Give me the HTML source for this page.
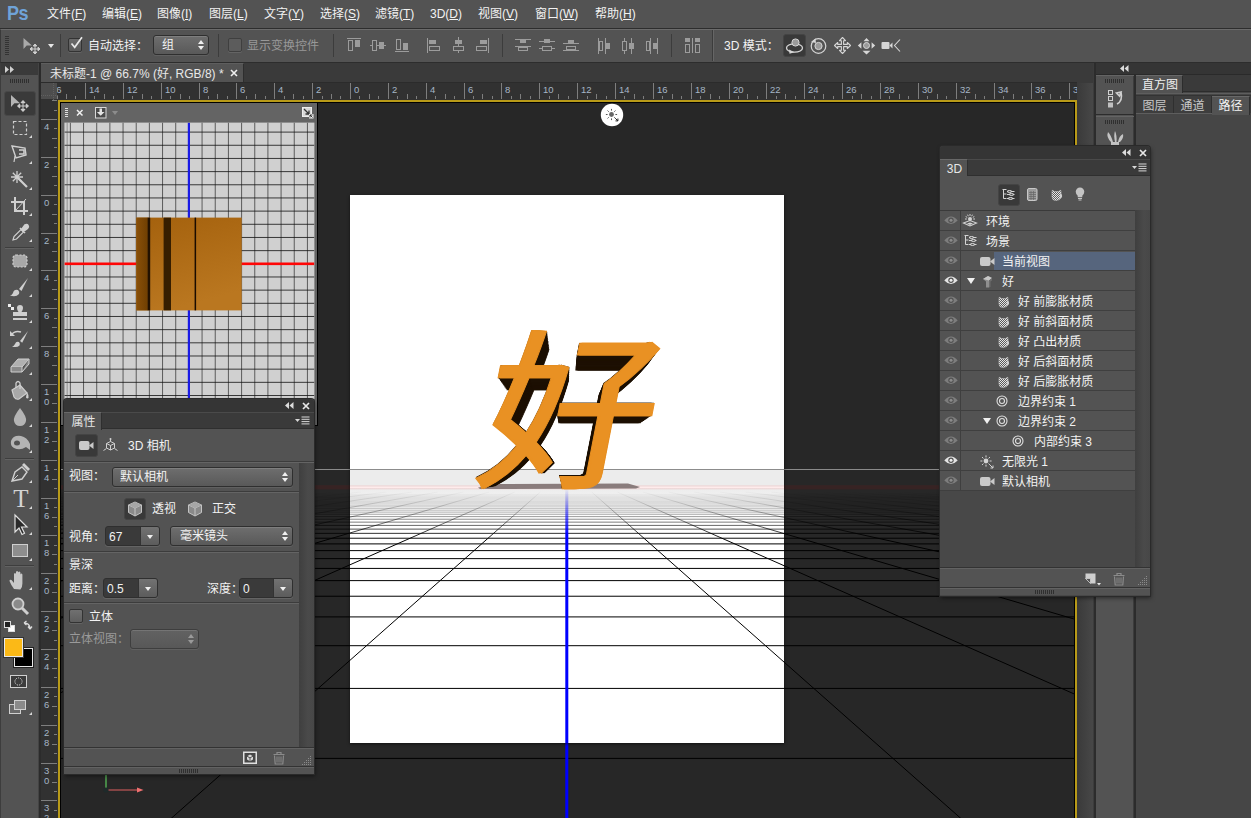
<!DOCTYPE html>
<html lang="zh-CN">
<head>
<meta charset="utf-8">
<title>未标题-1 @ 66.7% (好, RGB/8) *</title>
<style>
*{box-sizing:border-box;margin:0;padding:0}
html,body{width:1251px;height:818px;overflow:hidden;background:#535353}
body{font-family:"Liberation Sans","Noto Sans CJK SC",sans-serif;font-size:12px;color:#f0f0f0;line-height:1;position:relative}
#app{position:absolute;left:0;top:0;width:1251px;height:818px;overflow:hidden;background:#535353}
.abs{position:absolute}
svg{display:block;position:absolute;overflow:visible}

#menubar{position:absolute;left:0;top:0;width:1251px;height:29px;background:#535353;border-bottom:1px solid #2d2d2d}
#menubar .mi{position:absolute;top:7px;height:14px;line-height:14px;font-size:12px;color:#f2f2f2;white-space:nowrap;letter-spacing:0}
#menubar .mi u{text-decoration:underline;text-underline-offset:1px}
#pslogo{position:absolute;left:7px;top:1px;font-family:"Liberation Sans",sans-serif;font-weight:bold;font-size:21px;line-height:24px;color:#6fa3d8;letter-spacing:-0.5px;transform:scaleX(.86);transform-origin:0 0}
#optbar{position:absolute;left:0;top:29px;width:1251px;height:34px;background:#535353;border-top:1px solid #6b6b6b;border-bottom:1px solid #2d2d2d;border-left:1px solid #3a3a3a}
#optbar .t{position:absolute;top:9px;height:14px;line-height:14px;font-size:12px;color:#f2f2f2;white-space:nowrap}
#optbar .dis{color:#989898}
.vsep{position:absolute;width:1px;background:#3c3c3c}
.sel{position:absolute;border:1px solid #2f2f2f;border-radius:3px;background:linear-gradient(#6e6e6e,#595959);box-shadow:inset 0 1px 0 rgba(255,255,255,.12),0 1px 0 rgba(255,255,255,.08)}
.sel .lab{position:absolute;left:7px;top:0;bottom:0;display:flex;align-items:center;font-size:12px;color:#f2f2f2;white-space:nowrap}
.sel .ud{position:absolute;right:3px;top:50%;margin-top:-5px;width:7px;height:10px}
.sel .ud:before{content:"";position:absolute;left:0;top:0;border:3.5px solid transparent;border-top:none;border-bottom:4px solid #f0f0f0}
.sel .ud:after{content:"";position:absolute;left:0;bottom:0;border:3.5px solid transparent;border-bottom:none;border-top:4px solid #f0f0f0}
.sel.disabled .ud:before{border-bottom-color:#9a9a9a}
.sel.disabled .ud:after{border-top-color:#9a9a9a}
.chk{position:absolute;width:14px;height:14px;border:1px solid #333;border-radius:2px;background:linear-gradient(#6a6a6a,#5a5a5a);box-shadow:0 1px 0 rgba(255,255,255,.1)}
#tabstrip{position:absolute;left:41px;top:63px;width:1053px;height:20px;background:#3a3a3a;border-bottom:1px solid #2b2b2b}
#doctab{position:absolute;left:0;top:0;width:203px;height:19px;background:#535353;border-right:1px solid #2e2e2e;border-top:1px solid #5e5e5e}
#doctab .tt{position:absolute;left:9px;top:3px;line-height:14px;font-size:12px;color:#e8e8e8;white-space:nowrap}
#doctab .x{position:absolute;left:188px;top:1px;font-size:12px;line-height:16px;color:#eee;font-weight:bold}
#hruler{position:absolute;left:41px;top:83px;width:1036px;height:17px;background:#313131;overflow:hidden}
#vruler{position:absolute;left:41px;top:100px;width:17px;height:718px;background:#313131;overflow:hidden}
#rcorner{position:absolute;left:41px;top:83px;width:16px;height:16px;background:#4d4d4d}
.rl{position:absolute;font-size:9.5px;line-height:10px;color:#a6b6c6;font-family:"Liberation Sans",sans-serif}
#toolbar{position:absolute;left:0;top:63px;width:39px;height:755px;background:#535353;border-left:1px solid #3d3d3d;border-right:1px solid #444}
#toolbar .hd{position:absolute;left:0;top:0;width:37px;height:12px;background:#3a3a3a}
#tgap{position:absolute;left:39px;top:63px;width:2px;height:755px;background:#2b2b2b}
.grip{position:absolute;height:4px;background:repeating-linear-gradient(90deg,#2f2f2f 0 1px,transparent 1px 2px)}
.tsep{position:absolute;left:4px;width:29px;height:1px;background:#3e3e3e;box-shadow:0 1px 0 #626262}
.corner{position:absolute;width:0;height:0;border-left:3px solid transparent;border-bottom:3px solid #d8d8d8}


#canvas{position:absolute;left:58px;top:100px;width:1019px;height:718px;background:#272727;overflow:hidden}
#doc{position:absolute;left:292px;top:95px;width:434px;height:548px;background:#fff;box-shadow:0 1px 3px rgba(0,0,0,.55);overflow:hidden}
#cborder{position:absolute;left:58px;top:100px;width:1019px;height:720px;border:2px solid #b89a18;border-bottom:none;pointer-events:none;box-shadow:inset 0 0 0 1px #000,0 0 0 1px #4c5058}
#cborder2{position:absolute;left:60px;top:102px;width:1016px;height:720px;border:1px solid #000;border-bottom:none}
.hao{font-family:"Noto Sans CJK SC","Liberation Sans",sans-serif;font-weight:400}


.panel{position:absolute;background:#535353;box-shadow:0 0 0 1px #2a2a2a,1px 2px 4px rgba(0,0,0,.5)}
.ptop{position:absolute;left:0;top:0;right:0;height:13px;background:#353535;border-radius:3px 3px 0 0}
.ptabs{position:absolute;left:0;right:0;top:13px;height:17px;background:#3a3a3a;border-top:1px solid #4a4a4a;border-bottom:1px solid #2f2f2f}
.ptab{position:absolute;left:0;top:-1px;height:18px;background:#535353;border-right:1px solid #2f2f2f;border-top:1px solid #686868;font-size:12px;line-height:19px;color:#e6e6e6;text-align:center;padding-left:2px}
.hsep{position:absolute;height:2px;border-top:1px solid #3c3c3c;border-bottom:1px solid #646464}
.pl{position:absolute;font-size:12px;line-height:14px;color:#f2f2f2;white-space:nowrap}
.pl.dis{color:#9a9a9a}
.num{position:absolute;height:20px;border:1px solid #2f2f2f;border-radius:3px;background:#3a3a3a;box-shadow:0 1px 0 rgba(255,255,255,.1);overflow:hidden}
.num span{position:absolute;left:3px;top:3px;font-size:12px;line-height:14px;color:#f2f2f2}
.num i{position:absolute;right:0;top:0;bottom:0;width:19px;background:linear-gradient(#727272,#5c5c5c);border-left:1px solid #333}
.num i:after{content:"";position:absolute;left:6px;top:8px;border:3.5px solid transparent;border-top:4px solid #f0f0f0;border-bottom:none}
.pfoot{position:absolute;left:0;right:0;height:20px;background:#535353;border-top:1px solid #333;box-shadow:inset 0 1px 0 #626262}
.pgrip{position:absolute;left:0;right:0;height:8px;background:#535353;border-top:1px solid #333;box-shadow:inset 0 1px 0 #626262}
.row{position:absolute;left:0;width:195px;height:20px;border-bottom:1px solid #3f3f3f}
.row .eyec{position:absolute;left:0;top:0;width:21px;height:19px;border-right:1px solid #3f3f3f}
.row .nm{position:absolute;top:4px;font-size:12px;line-height:14px;color:#f2f2f2;white-space:nowrap}
#dock{position:absolute;left:1077px;top:63px;width:174px;height:755px;background:#464646}
.dtab{position:absolute;height:18px;font-size:12px;line-height:20px;text-align:center;color:#c8c8c8;background:#3e3e3e;border-right:1px solid #2f2f2f}

</style>
</head>
<body>
<div id="app">

<div id="canvas">
<svg width="1020" height="718" viewBox="0 0 1020 718" style="left:0;top:0"><defs>
<linearGradient id="rga" gradientUnits="userSpaceOnUse" x1="0" y1="390.0" x2="0" y2="440.0"><stop offset="0" stop-color="#000" stop-opacity="0"/><stop offset="0.25" stop-color="#000" stop-opacity="0.125"/><stop offset="0.5" stop-color="#000" stop-opacity="0.354"/><stop offset="0.75" stop-color="#000" stop-opacity="0.65"/><stop offset="1" stop-color="#000" stop-opacity="1"/></linearGradient>
</defs><rect x="0" y="370" width="1020" height="17" fill="#272727"/><line x1="0" x2="1020" y1="658.40" y2="658.40" stroke="#000" stroke-opacity="1.00" stroke-width="1.0"/>
<line x1="0" x2="1020" y1="588.41" y2="588.41" stroke="#000" stroke-opacity="1.00" stroke-width="1.0"/>
<line x1="0" x2="1020" y1="545.70" y2="545.70" stroke="#000" stroke-opacity="1.00" stroke-width="1.0"/>
<line x1="0" x2="1020" y1="516.92" y2="516.92" stroke="#000" stroke-opacity="1.00" stroke-width="1.0"/>
<line x1="0" x2="1020" y1="496.22" y2="496.22" stroke="#000" stroke-opacity="1.00" stroke-width="1.0"/>
<line x1="0" x2="1020" y1="480.61" y2="480.61" stroke="#000" stroke-opacity="1.00" stroke-width="1.0"/>
<line x1="0" x2="1020" y1="468.42" y2="468.42" stroke="#000" stroke-opacity="1.00" stroke-width="1.0"/>
<line x1="0" x2="1020" y1="458.63" y2="458.63" stroke="#000" stroke-opacity="1.00" stroke-width="1.0"/>
<line x1="0" x2="1020" y1="450.61" y2="450.61" stroke="#000" stroke-opacity="1.00" stroke-width="1.0"/>
<line x1="0" x2="1020" y1="443.90" y2="443.90" stroke="#000" stroke-opacity="1.00" stroke-width="1.0"/>
<line x1="0" x2="1020" y1="438.22" y2="438.22" stroke="#000" stroke-opacity="0.95" stroke-width="1.0"/>
<line x1="0" x2="1020" y1="433.35" y2="433.35" stroke="#000" stroke-opacity="0.81" stroke-width="1.0"/>
<line x1="0" x2="1020" y1="429.11" y2="429.11" stroke="#000" stroke-opacity="0.69" stroke-width="1.0"/>
<line x1="0" x2="1020" y1="425.40" y2="425.40" stroke="#000" stroke-opacity="0.60" stroke-width="1.0"/>
<line x1="0" x2="1020" y1="422.13" y2="422.13" stroke="#000" stroke-opacity="0.52" stroke-width="1.0"/>
<line x1="0" x2="1020" y1="419.22" y2="419.22" stroke="#000" stroke-opacity="0.45" stroke-width="1.0"/>
<line x1="0" x2="1020" y1="416.61" y2="416.61" stroke="#000" stroke-opacity="0.39" stroke-width="1.0"/>
<line x1="0" x2="1020" y1="414.26" y2="414.26" stroke="#000" stroke-opacity="0.34" stroke-width="1.0"/>
<line x1="0" x2="1020" y1="412.13" y2="412.13" stroke="#000" stroke-opacity="0.29" stroke-width="1.0"/>
<line x1="0" x2="1020" y1="410.19" y2="410.19" stroke="#000" stroke-opacity="0.26" stroke-width="1.0"/>
<line x1="0" x2="1020" y1="408.43" y2="408.43" stroke="#000" stroke-opacity="0.22" stroke-width="1.0"/>
<line x1="0" x2="1020" y1="406.80" y2="406.80" stroke="#000" stroke-opacity="0.19" stroke-width="1.0"/>
<line x1="0" x2="1020" y1="405.31" y2="405.31" stroke="#000" stroke-opacity="0.17" stroke-width="1.0"/>
<line x1="0" x2="1020" y1="403.93" y2="403.93" stroke="#000" stroke-opacity="0.15" stroke-width="1.0"/>
<line x1="0" x2="1020" y1="402.66" y2="402.66" stroke="#000" stroke-opacity="0.13" stroke-width="1.0"/>
<line x1="0" x2="1020" y1="401.47" y2="401.47" stroke="#000" stroke-opacity="0.11" stroke-width="1.0"/>
<line x1="0" x2="1020" y1="400.37" y2="400.37" stroke="#000" stroke-opacity="0.09" stroke-width="1.0"/>
<line x1="0" x2="1020" y1="399.34" y2="399.34" stroke="#000" stroke-opacity="0.08" stroke-width="1.0"/>
<line x1="0" x2="1020" y1="398.37" y2="398.37" stroke="#000" stroke-opacity="0.07" stroke-width="1.0"/>
<line x1="0" x2="1020" y1="397.47" y2="397.47" stroke="#000" stroke-opacity="0.06" stroke-width="1.0"/>
<line x1="0" x2="1020" y1="396.62" y2="396.62" stroke="#000" stroke-opacity="0.05" stroke-width="1.0"/>
<line x1="0" x2="1020" y1="395.82" y2="395.82" stroke="#000" stroke-opacity="0.04" stroke-width="1.0"/>
<line x1="0" x2="1020" y1="395.06" y2="395.06" stroke="#000" stroke-opacity="0.03" stroke-width="1.0"/>
<line x1="0" x2="1020" y1="394.35" y2="394.35" stroke="#000" stroke-opacity="0.03" stroke-width="1.0"/>
<line x1="-518.95" y1="392.00" x2="-15493.39" y2="723.00" stroke="url(#rga)" stroke-width="1.0"/>
<line x1="-493.27" y1="392.00" x2="-15093.35" y2="723.00" stroke="url(#rga)" stroke-width="1.0"/>
<line x1="-467.60" y1="392.00" x2="-14693.32" y2="723.00" stroke="url(#rga)" stroke-width="1.0"/>
<line x1="-441.93" y1="392.00" x2="-14293.28" y2="723.00" stroke="url(#rga)" stroke-width="1.0"/>
<line x1="-416.25" y1="392.00" x2="-13893.25" y2="723.00" stroke="url(#rga)" stroke-width="1.0"/>
<line x1="-390.58" y1="392.00" x2="-13493.21" y2="723.00" stroke="url(#rga)" stroke-width="1.0"/>
<line x1="-364.91" y1="392.00" x2="-13093.18" y2="723.00" stroke="url(#rga)" stroke-width="1.0"/>
<line x1="-339.23" y1="392.00" x2="-12693.15" y2="723.00" stroke="url(#rga)" stroke-width="1.0"/>
<line x1="-313.56" y1="392.00" x2="-12293.11" y2="723.00" stroke="url(#rga)" stroke-width="1.0"/>
<line x1="-287.88" y1="392.00" x2="-11893.08" y2="723.00" stroke="url(#rga)" stroke-width="1.0"/>
<line x1="-262.21" y1="392.00" x2="-11493.04" y2="723.00" stroke="url(#rga)" stroke-width="1.0"/>
<line x1="-236.54" y1="392.00" x2="-11093.01" y2="723.00" stroke="url(#rga)" stroke-width="1.0"/>
<line x1="-210.86" y1="392.00" x2="-10692.97" y2="723.00" stroke="url(#rga)" stroke-width="1.0"/>
<line x1="-185.19" y1="392.00" x2="-10292.94" y2="723.00" stroke="url(#rga)" stroke-width="1.0"/>
<line x1="-159.52" y1="392.00" x2="-9892.90" y2="723.00" stroke="url(#rga)" stroke-width="1.0"/>
<line x1="-133.84" y1="392.00" x2="-9492.87" y2="723.00" stroke="url(#rga)" stroke-width="1.0"/>
<line x1="-108.17" y1="392.00" x2="-9092.83" y2="723.00" stroke="url(#rga)" stroke-width="1.0"/>
<line x1="-82.50" y1="392.00" x2="-8692.80" y2="723.00" stroke="url(#rga)" stroke-width="1.0"/>
<line x1="-56.82" y1="392.00" x2="-8292.76" y2="723.00" stroke="url(#rga)" stroke-width="1.0"/>
<line x1="-31.15" y1="392.00" x2="-7892.73" y2="723.00" stroke="url(#rga)" stroke-width="1.0"/>
<line x1="-5.47" y1="392.00" x2="-7492.69" y2="723.00" stroke="url(#rga)" stroke-width="1.0"/>
<line x1="20.20" y1="392.00" x2="-7092.66" y2="723.00" stroke="url(#rga)" stroke-width="1.0"/>
<line x1="45.87" y1="392.00" x2="-6692.62" y2="723.00" stroke="url(#rga)" stroke-width="1.0"/>
<line x1="71.55" y1="392.00" x2="-6292.59" y2="723.00" stroke="url(#rga)" stroke-width="1.0"/>
<line x1="97.22" y1="392.00" x2="-5892.56" y2="723.00" stroke="url(#rga)" stroke-width="1.0"/>
<line x1="122.89" y1="392.00" x2="-5492.52" y2="723.00" stroke="url(#rga)" stroke-width="1.0"/>
<line x1="148.57" y1="392.00" x2="-5092.49" y2="723.00" stroke="url(#rga)" stroke-width="1.0"/>
<line x1="174.24" y1="392.00" x2="-4692.45" y2="723.00" stroke="url(#rga)" stroke-width="1.0"/>
<line x1="199.92" y1="392.00" x2="-4292.42" y2="723.00" stroke="url(#rga)" stroke-width="1.0"/>
<line x1="225.59" y1="392.00" x2="-3892.38" y2="723.00" stroke="url(#rga)" stroke-width="1.0"/>
<line x1="251.26" y1="392.00" x2="-3492.35" y2="723.00" stroke="url(#rga)" stroke-width="1.0"/>
<line x1="276.94" y1="392.00" x2="-3092.31" y2="723.00" stroke="url(#rga)" stroke-width="1.0"/>
<line x1="302.61" y1="392.00" x2="-2692.28" y2="723.00" stroke="url(#rga)" stroke-width="1.0"/>
<line x1="328.28" y1="392.00" x2="-2292.24" y2="723.00" stroke="url(#rga)" stroke-width="1.0"/>
<line x1="353.96" y1="392.00" x2="-1892.21" y2="723.00" stroke="url(#rga)" stroke-width="1.0"/>
<line x1="379.63" y1="392.00" x2="-1492.17" y2="723.00" stroke="url(#rga)" stroke-width="1.0"/>
<line x1="405.31" y1="392.00" x2="-1092.14" y2="723.00" stroke="url(#rga)" stroke-width="1.0"/>
<line x1="430.98" y1="392.00" x2="-692.10" y2="723.00" stroke="url(#rga)" stroke-width="1.0"/>
<line x1="456.65" y1="392.00" x2="-292.07" y2="723.00" stroke="url(#rga)" stroke-width="1.0"/>
<line x1="482.33" y1="392.00" x2="107.97" y2="723.00" stroke="url(#rga)" stroke-width="1.0"/>
<line x1="533.67" y1="392.00" x2="908.03" y2="723.00" stroke="url(#rga)" stroke-width="1.0"/>
<line x1="559.35" y1="392.00" x2="1308.07" y2="723.00" stroke="url(#rga)" stroke-width="1.0"/>
<line x1="585.02" y1="392.00" x2="1708.10" y2="723.00" stroke="url(#rga)" stroke-width="1.0"/>
<line x1="610.69" y1="392.00" x2="2108.14" y2="723.00" stroke="url(#rga)" stroke-width="1.0"/>
<line x1="636.37" y1="392.00" x2="2508.17" y2="723.00" stroke="url(#rga)" stroke-width="1.0"/>
<line x1="662.04" y1="392.00" x2="2908.21" y2="723.00" stroke="url(#rga)" stroke-width="1.0"/>
<line x1="687.72" y1="392.00" x2="3308.24" y2="723.00" stroke="url(#rga)" stroke-width="1.0"/>
<line x1="713.39" y1="392.00" x2="3708.28" y2="723.00" stroke="url(#rga)" stroke-width="1.0"/>
<line x1="739.06" y1="392.00" x2="4108.31" y2="723.00" stroke="url(#rga)" stroke-width="1.0"/>
<line x1="764.74" y1="392.00" x2="4508.35" y2="723.00" stroke="url(#rga)" stroke-width="1.0"/>
<line x1="790.41" y1="392.00" x2="4908.38" y2="723.00" stroke="url(#rga)" stroke-width="1.0"/>
<line x1="816.08" y1="392.00" x2="5308.42" y2="723.00" stroke="url(#rga)" stroke-width="1.0"/>
<line x1="841.76" y1="392.00" x2="5708.45" y2="723.00" stroke="url(#rga)" stroke-width="1.0"/>
<line x1="867.43" y1="392.00" x2="6108.49" y2="723.00" stroke="url(#rga)" stroke-width="1.0"/>
<line x1="893.11" y1="392.00" x2="6508.52" y2="723.00" stroke="url(#rga)" stroke-width="1.0"/>
<line x1="918.78" y1="392.00" x2="6908.56" y2="723.00" stroke="url(#rga)" stroke-width="1.0"/>
<line x1="944.45" y1="392.00" x2="7308.59" y2="723.00" stroke="url(#rga)" stroke-width="1.0"/>
<line x1="970.13" y1="392.00" x2="7708.62" y2="723.00" stroke="url(#rga)" stroke-width="1.0"/>
<line x1="995.80" y1="392.00" x2="8108.66" y2="723.00" stroke="url(#rga)" stroke-width="1.0"/>
<line x1="1021.47" y1="392.00" x2="8508.69" y2="723.00" stroke="url(#rga)" stroke-width="1.0"/>
<line x1="1047.15" y1="392.00" x2="8908.73" y2="723.00" stroke="url(#rga)" stroke-width="1.0"/>
<line x1="1072.82" y1="392.00" x2="9308.76" y2="723.00" stroke="url(#rga)" stroke-width="1.0"/>
<line x1="1098.50" y1="392.00" x2="9708.80" y2="723.00" stroke="url(#rga)" stroke-width="1.0"/>
<line x1="1124.17" y1="392.00" x2="10108.83" y2="723.00" stroke="url(#rga)" stroke-width="1.0"/>
<line x1="1149.84" y1="392.00" x2="10508.87" y2="723.00" stroke="url(#rga)" stroke-width="1.0"/>
<line x1="1175.52" y1="392.00" x2="10908.90" y2="723.00" stroke="url(#rga)" stroke-width="1.0"/>
<line x1="1201.19" y1="392.00" x2="11308.94" y2="723.00" stroke="url(#rga)" stroke-width="1.0"/>
<line x1="1226.86" y1="392.00" x2="11708.97" y2="723.00" stroke="url(#rga)" stroke-width="1.0"/>
<line x1="1252.54" y1="392.00" x2="12109.01" y2="723.00" stroke="url(#rga)" stroke-width="1.0"/>
<line x1="1278.21" y1="392.00" x2="12509.04" y2="723.00" stroke="url(#rga)" stroke-width="1.0"/>
<line x1="1303.88" y1="392.00" x2="12909.08" y2="723.00" stroke="url(#rga)" stroke-width="1.0"/>
<line x1="1329.56" y1="392.00" x2="13309.11" y2="723.00" stroke="url(#rga)" stroke-width="1.0"/>
<line x1="1355.23" y1="392.00" x2="13709.15" y2="723.00" stroke="url(#rga)" stroke-width="1.0"/>
<line x1="1380.91" y1="392.00" x2="14109.18" y2="723.00" stroke="url(#rga)" stroke-width="1.0"/>
<line x1="1406.58" y1="392.00" x2="14509.21" y2="723.00" stroke="url(#rga)" stroke-width="1.0"/>
<line x1="1432.25" y1="392.00" x2="14909.25" y2="723.00" stroke="url(#rga)" stroke-width="1.0"/>
<line x1="1457.93" y1="392.00" x2="15309.28" y2="723.00" stroke="url(#rga)" stroke-width="1.0"/>
<line x1="1483.60" y1="392.00" x2="15709.32" y2="723.00" stroke="url(#rga)" stroke-width="1.0"/>
<line x1="1509.27" y1="392.00" x2="16109.35" y2="723.00" stroke="url(#rga)" stroke-width="1.0"/>
<line x1="1534.95" y1="392.00" x2="16509.39" y2="723.00" stroke="url(#rga)" stroke-width="1.0"/><rect x="0" y="385.2" width="1020" height="4.2" fill="#ff0000" fill-opacity="0.08"/><rect x="0" y="369" width="1020" height="1" fill="#8a8a8a"/><rect x="507.29999999999995" y="643" width="3" height="80" fill="#0000ff"/><g><line x1="48" y1="674" x2="48" y2="688" stroke="#4fa04f" stroke-width="1.6"/><line x1="50" y1="690" x2="80" y2="690" stroke="#e06060" stroke-width="1"/><path d="M79 687.5 L85.5 690 L79 692.5Z" fill="#f07070"/><circle cx="48" cy="690" r="2.6" fill="#1e2a2a"/></g><g><circle cx="554" cy="15" r="11.2" fill="#fff"/><circle cx="553.5" cy="14.5" r="2.4" fill="#666"/><line x1="557.40" y1="14.50" x2="559.10" y2="14.50" stroke="#444" stroke-width="0.9"/><line x1="556.26" y1="17.26" x2="557.46" y2="18.46" stroke="#444" stroke-width="0.9"/><line x1="553.50" y1="18.40" x2="553.50" y2="20.10" stroke="#444" stroke-width="0.9"/><line x1="550.74" y1="17.26" x2="549.54" y2="18.46" stroke="#444" stroke-width="0.9"/><line x1="549.60" y1="14.50" x2="547.90" y2="14.50" stroke="#444" stroke-width="0.9"/><line x1="550.74" y1="11.74" x2="549.54" y2="10.54" stroke="#444" stroke-width="0.9"/><line x1="553.50" y1="10.60" x2="553.50" y2="8.90" stroke="#444" stroke-width="0.9"/><line x1="556.26" y1="11.74" x2="557.46" y2="10.54" stroke="#444" stroke-width="0.9"/><path d="M557.3 18.299999999999997 l2.6 2.6 m0 -2.4 v2.4 h-2.4" stroke="#222" stroke-width="1" fill="none"/></g></svg>
<div id="doc">
<svg width="434" height="548" viewBox="0 0 434 548" style="left:0;top:0"><defs>
<linearGradient id="rga2" gradientUnits="userSpaceOnUse" x1="0" y1="295.0" x2="0" y2="345.0"><stop offset="0" stop-color="#000" stop-opacity="0"/><stop offset="0.25" stop-color="#000" stop-opacity="0.125"/><stop offset="0.5" stop-color="#000" stop-opacity="0.354"/><stop offset="0.75" stop-color="#000" stop-opacity="0.65"/><stop offset="1" stop-color="#000" stop-opacity="1"/></linearGradient>
</defs><rect x="0" y="274.5" width="434" height="17" fill="#ececec"/><linearGradient id="fog" x1="0" y1="0" x2="0" y2="1"><stop offset="0" stop-color="#ececec"/><stop offset="1" stop-color="#ececec" stop-opacity="0"/></linearGradient><rect x="0" y="293" width="434" height="30" fill="url(#fog)"/><line x1="0" x2="434" y1="563.40" y2="563.40" stroke="#000" stroke-opacity="1.00" stroke-width="1.0"/>
<line x1="0" x2="434" y1="493.41" y2="493.41" stroke="#000" stroke-opacity="1.00" stroke-width="1.0"/>
<line x1="0" x2="434" y1="450.70" y2="450.70" stroke="#000" stroke-opacity="1.00" stroke-width="1.0"/>
<line x1="0" x2="434" y1="421.92" y2="421.92" stroke="#000" stroke-opacity="1.00" stroke-width="1.0"/>
<line x1="0" x2="434" y1="401.22" y2="401.22" stroke="#000" stroke-opacity="1.00" stroke-width="1.0"/>
<line x1="0" x2="434" y1="385.61" y2="385.61" stroke="#000" stroke-opacity="1.00" stroke-width="1.0"/>
<line x1="0" x2="434" y1="373.42" y2="373.42" stroke="#000" stroke-opacity="1.00" stroke-width="1.0"/>
<line x1="0" x2="434" y1="363.63" y2="363.63" stroke="#000" stroke-opacity="1.00" stroke-width="1.0"/>
<line x1="0" x2="434" y1="355.61" y2="355.61" stroke="#000" stroke-opacity="1.00" stroke-width="1.0"/>
<line x1="0" x2="434" y1="348.90" y2="348.90" stroke="#000" stroke-opacity="1.00" stroke-width="1.0"/>
<line x1="0" x2="434" y1="343.22" y2="343.22" stroke="#000" stroke-opacity="0.95" stroke-width="1.0"/>
<line x1="0" x2="434" y1="338.35" y2="338.35" stroke="#000" stroke-opacity="0.81" stroke-width="1.0"/>
<line x1="0" x2="434" y1="334.11" y2="334.11" stroke="#000" stroke-opacity="0.69" stroke-width="1.0"/>
<line x1="0" x2="434" y1="330.40" y2="330.40" stroke="#000" stroke-opacity="0.60" stroke-width="1.0"/>
<line x1="0" x2="434" y1="327.13" y2="327.13" stroke="#000" stroke-opacity="0.52" stroke-width="1.0"/>
<line x1="0" x2="434" y1="324.22" y2="324.22" stroke="#000" stroke-opacity="0.45" stroke-width="1.0"/>
<line x1="0" x2="434" y1="321.61" y2="321.61" stroke="#000" stroke-opacity="0.39" stroke-width="1.0"/>
<line x1="0" x2="434" y1="319.26" y2="319.26" stroke="#000" stroke-opacity="0.34" stroke-width="1.0"/>
<line x1="0" x2="434" y1="317.13" y2="317.13" stroke="#000" stroke-opacity="0.29" stroke-width="1.0"/>
<line x1="0" x2="434" y1="315.19" y2="315.19" stroke="#000" stroke-opacity="0.26" stroke-width="1.0"/>
<line x1="0" x2="434" y1="313.43" y2="313.43" stroke="#000" stroke-opacity="0.22" stroke-width="1.0"/>
<line x1="0" x2="434" y1="311.80" y2="311.80" stroke="#000" stroke-opacity="0.19" stroke-width="1.0"/>
<line x1="0" x2="434" y1="310.31" y2="310.31" stroke="#000" stroke-opacity="0.17" stroke-width="1.0"/>
<line x1="0" x2="434" y1="308.93" y2="308.93" stroke="#000" stroke-opacity="0.15" stroke-width="1.0"/>
<line x1="0" x2="434" y1="307.66" y2="307.66" stroke="#000" stroke-opacity="0.13" stroke-width="1.0"/>
<line x1="0" x2="434" y1="306.47" y2="306.47" stroke="#000" stroke-opacity="0.11" stroke-width="1.0"/>
<line x1="0" x2="434" y1="305.37" y2="305.37" stroke="#000" stroke-opacity="0.09" stroke-width="1.0"/>
<line x1="0" x2="434" y1="304.34" y2="304.34" stroke="#000" stroke-opacity="0.08" stroke-width="1.0"/>
<line x1="0" x2="434" y1="303.37" y2="303.37" stroke="#000" stroke-opacity="0.07" stroke-width="1.0"/>
<line x1="0" x2="434" y1="302.47" y2="302.47" stroke="#000" stroke-opacity="0.06" stroke-width="1.0"/>
<line x1="0" x2="434" y1="301.62" y2="301.62" stroke="#000" stroke-opacity="0.05" stroke-width="1.0"/>
<line x1="0" x2="434" y1="300.82" y2="300.82" stroke="#000" stroke-opacity="0.04" stroke-width="1.0"/>
<line x1="0" x2="434" y1="300.06" y2="300.06" stroke="#000" stroke-opacity="0.03" stroke-width="1.0"/>
<line x1="0" x2="434" y1="299.35" y2="299.35" stroke="#000" stroke-opacity="0.03" stroke-width="1.0"/>
<line x1="-810.95" y1="297.00" x2="-12392.39" y2="553.00" stroke="url(#rga2)" stroke-width="1.0"/>
<line x1="-785.27" y1="297.00" x2="-12077.18" y2="553.00" stroke="url(#rga2)" stroke-width="1.0"/>
<line x1="-759.60" y1="297.00" x2="-11761.97" y2="553.00" stroke="url(#rga2)" stroke-width="1.0"/>
<line x1="-733.93" y1="297.00" x2="-11446.76" y2="553.00" stroke="url(#rga2)" stroke-width="1.0"/>
<line x1="-708.25" y1="297.00" x2="-11131.55" y2="553.00" stroke="url(#rga2)" stroke-width="1.0"/>
<line x1="-682.58" y1="297.00" x2="-10816.34" y2="553.00" stroke="url(#rga2)" stroke-width="1.0"/>
<line x1="-656.91" y1="297.00" x2="-10501.13" y2="553.00" stroke="url(#rga2)" stroke-width="1.0"/>
<line x1="-631.23" y1="297.00" x2="-10185.92" y2="553.00" stroke="url(#rga2)" stroke-width="1.0"/>
<line x1="-605.56" y1="297.00" x2="-9870.71" y2="553.00" stroke="url(#rga2)" stroke-width="1.0"/>
<line x1="-579.88" y1="297.00" x2="-9555.50" y2="553.00" stroke="url(#rga2)" stroke-width="1.0"/>
<line x1="-554.21" y1="297.00" x2="-9240.29" y2="553.00" stroke="url(#rga2)" stroke-width="1.0"/>
<line x1="-528.54" y1="297.00" x2="-8925.08" y2="553.00" stroke="url(#rga2)" stroke-width="1.0"/>
<line x1="-502.86" y1="297.00" x2="-8609.87" y2="553.00" stroke="url(#rga2)" stroke-width="1.0"/>
<line x1="-477.19" y1="297.00" x2="-8294.66" y2="553.00" stroke="url(#rga2)" stroke-width="1.0"/>
<line x1="-451.52" y1="297.00" x2="-7979.45" y2="553.00" stroke="url(#rga2)" stroke-width="1.0"/>
<line x1="-425.84" y1="297.00" x2="-7664.24" y2="553.00" stroke="url(#rga2)" stroke-width="1.0"/>
<line x1="-400.17" y1="297.00" x2="-7349.03" y2="553.00" stroke="url(#rga2)" stroke-width="1.0"/>
<line x1="-374.50" y1="297.00" x2="-7033.82" y2="553.00" stroke="url(#rga2)" stroke-width="1.0"/>
<line x1="-348.82" y1="297.00" x2="-6718.61" y2="553.00" stroke="url(#rga2)" stroke-width="1.0"/>
<line x1="-323.15" y1="297.00" x2="-6403.40" y2="553.00" stroke="url(#rga2)" stroke-width="1.0"/>
<line x1="-297.47" y1="297.00" x2="-6088.19" y2="553.00" stroke="url(#rga2)" stroke-width="1.0"/>
<line x1="-271.80" y1="297.00" x2="-5772.98" y2="553.00" stroke="url(#rga2)" stroke-width="1.0"/>
<line x1="-246.13" y1="297.00" x2="-5457.77" y2="553.00" stroke="url(#rga2)" stroke-width="1.0"/>
<line x1="-220.45" y1="297.00" x2="-5142.56" y2="553.00" stroke="url(#rga2)" stroke-width="1.0"/>
<line x1="-194.78" y1="297.00" x2="-4827.36" y2="553.00" stroke="url(#rga2)" stroke-width="1.0"/>
<line x1="-169.11" y1="297.00" x2="-4512.15" y2="553.00" stroke="url(#rga2)" stroke-width="1.0"/>
<line x1="-143.43" y1="297.00" x2="-4196.94" y2="553.00" stroke="url(#rga2)" stroke-width="1.0"/>
<line x1="-117.76" y1="297.00" x2="-3881.73" y2="553.00" stroke="url(#rga2)" stroke-width="1.0"/>
<line x1="-92.08" y1="297.00" x2="-3566.52" y2="553.00" stroke="url(#rga2)" stroke-width="1.0"/>
<line x1="-66.41" y1="297.00" x2="-3251.31" y2="553.00" stroke="url(#rga2)" stroke-width="1.0"/>
<line x1="-40.74" y1="297.00" x2="-2936.10" y2="553.00" stroke="url(#rga2)" stroke-width="1.0"/>
<line x1="-15.06" y1="297.00" x2="-2620.89" y2="553.00" stroke="url(#rga2)" stroke-width="1.0"/>
<line x1="10.61" y1="297.00" x2="-2305.68" y2="553.00" stroke="url(#rga2)" stroke-width="1.0"/>
<line x1="36.28" y1="297.00" x2="-1990.47" y2="553.00" stroke="url(#rga2)" stroke-width="1.0"/>
<line x1="61.96" y1="297.00" x2="-1675.26" y2="553.00" stroke="url(#rga2)" stroke-width="1.0"/>
<line x1="87.63" y1="297.00" x2="-1360.05" y2="553.00" stroke="url(#rga2)" stroke-width="1.0"/>
<line x1="113.31" y1="297.00" x2="-1044.84" y2="553.00" stroke="url(#rga2)" stroke-width="1.0"/>
<line x1="138.98" y1="297.00" x2="-729.63" y2="553.00" stroke="url(#rga2)" stroke-width="1.0"/>
<line x1="164.65" y1="297.00" x2="-414.42" y2="553.00" stroke="url(#rga2)" stroke-width="1.0"/>
<line x1="190.33" y1="297.00" x2="-99.21" y2="553.00" stroke="url(#rga2)" stroke-width="1.0"/>
<line x1="241.67" y1="297.00" x2="531.21" y2="553.00" stroke="url(#rga2)" stroke-width="1.0"/>
<line x1="267.35" y1="297.00" x2="846.42" y2="553.00" stroke="url(#rga2)" stroke-width="1.0"/>
<line x1="293.02" y1="297.00" x2="1161.63" y2="553.00" stroke="url(#rga2)" stroke-width="1.0"/>
<line x1="318.69" y1="297.00" x2="1476.84" y2="553.00" stroke="url(#rga2)" stroke-width="1.0"/>
<line x1="344.37" y1="297.00" x2="1792.05" y2="553.00" stroke="url(#rga2)" stroke-width="1.0"/>
<line x1="370.04" y1="297.00" x2="2107.26" y2="553.00" stroke="url(#rga2)" stroke-width="1.0"/>
<line x1="395.72" y1="297.00" x2="2422.47" y2="553.00" stroke="url(#rga2)" stroke-width="1.0"/>
<line x1="421.39" y1="297.00" x2="2737.68" y2="553.00" stroke="url(#rga2)" stroke-width="1.0"/>
<line x1="447.06" y1="297.00" x2="3052.89" y2="553.00" stroke="url(#rga2)" stroke-width="1.0"/>
<line x1="472.74" y1="297.00" x2="3368.10" y2="553.00" stroke="url(#rga2)" stroke-width="1.0"/>
<line x1="498.41" y1="297.00" x2="3683.31" y2="553.00" stroke="url(#rga2)" stroke-width="1.0"/>
<line x1="524.08" y1="297.00" x2="3998.52" y2="553.00" stroke="url(#rga2)" stroke-width="1.0"/>
<line x1="549.76" y1="297.00" x2="4313.73" y2="553.00" stroke="url(#rga2)" stroke-width="1.0"/>
<line x1="575.43" y1="297.00" x2="4628.94" y2="553.00" stroke="url(#rga2)" stroke-width="1.0"/>
<line x1="601.11" y1="297.00" x2="4944.15" y2="553.00" stroke="url(#rga2)" stroke-width="1.0"/>
<line x1="626.78" y1="297.00" x2="5259.36" y2="553.00" stroke="url(#rga2)" stroke-width="1.0"/>
<line x1="652.45" y1="297.00" x2="5574.56" y2="553.00" stroke="url(#rga2)" stroke-width="1.0"/>
<line x1="678.13" y1="297.00" x2="5889.77" y2="553.00" stroke="url(#rga2)" stroke-width="1.0"/>
<line x1="703.80" y1="297.00" x2="6204.98" y2="553.00" stroke="url(#rga2)" stroke-width="1.0"/>
<line x1="729.47" y1="297.00" x2="6520.19" y2="553.00" stroke="url(#rga2)" stroke-width="1.0"/>
<line x1="755.15" y1="297.00" x2="6835.40" y2="553.00" stroke="url(#rga2)" stroke-width="1.0"/>
<line x1="780.82" y1="297.00" x2="7150.61" y2="553.00" stroke="url(#rga2)" stroke-width="1.0"/>
<line x1="806.50" y1="297.00" x2="7465.82" y2="553.00" stroke="url(#rga2)" stroke-width="1.0"/>
<line x1="832.17" y1="297.00" x2="7781.03" y2="553.00" stroke="url(#rga2)" stroke-width="1.0"/>
<line x1="857.84" y1="297.00" x2="8096.24" y2="553.00" stroke="url(#rga2)" stroke-width="1.0"/>
<line x1="883.52" y1="297.00" x2="8411.45" y2="553.00" stroke="url(#rga2)" stroke-width="1.0"/>
<line x1="909.19" y1="297.00" x2="8726.66" y2="553.00" stroke="url(#rga2)" stroke-width="1.0"/>
<line x1="934.86" y1="297.00" x2="9041.87" y2="553.00" stroke="url(#rga2)" stroke-width="1.0"/>
<line x1="960.54" y1="297.00" x2="9357.08" y2="553.00" stroke="url(#rga2)" stroke-width="1.0"/>
<line x1="986.21" y1="297.00" x2="9672.29" y2="553.00" stroke="url(#rga2)" stroke-width="1.0"/>
<line x1="1011.88" y1="297.00" x2="9987.50" y2="553.00" stroke="url(#rga2)" stroke-width="1.0"/>
<line x1="1037.56" y1="297.00" x2="10302.71" y2="553.00" stroke="url(#rga2)" stroke-width="1.0"/>
<line x1="1063.23" y1="297.00" x2="10617.92" y2="553.00" stroke="url(#rga2)" stroke-width="1.0"/>
<line x1="1088.91" y1="297.00" x2="10933.13" y2="553.00" stroke="url(#rga2)" stroke-width="1.0"/>
<line x1="1114.58" y1="297.00" x2="11248.34" y2="553.00" stroke="url(#rga2)" stroke-width="1.0"/>
<line x1="1140.25" y1="297.00" x2="11563.55" y2="553.00" stroke="url(#rga2)" stroke-width="1.0"/>
<line x1="1165.93" y1="297.00" x2="11878.76" y2="553.00" stroke="url(#rga2)" stroke-width="1.0"/>
<line x1="1191.60" y1="297.00" x2="12193.97" y2="553.00" stroke="url(#rga2)" stroke-width="1.0"/>
<line x1="1217.27" y1="297.00" x2="12509.18" y2="553.00" stroke="url(#rga2)" stroke-width="1.0"/>
<line x1="1242.95" y1="297.00" x2="12824.39" y2="553.00" stroke="url(#rga2)" stroke-width="1.0"/><rect x="0" y="290.2" width="434" height="4.2" fill="#ff0000" fill-opacity="0.08"/><rect x="0" y="274" width="434" height="1" fill="#8c8c8c"/><linearGradient id="bl" gradientUnits="userSpaceOnUse" x1="0" y1="293" x2="0" y2="340"><stop offset="0" stop-color="#0000ff" stop-opacity="0"/><stop offset="1" stop-color="#0000ff"/></linearGradient><rect x="215.29999999999995" y="293" width="3" height="255" fill="url(#bl)"/><path d="M128 292.5 L150 289 L278 288.5 L290 292 L286 293.5 L130 294Z" fill="#8a7c7c"/><text class="hao" transform="translate(216.00 274.30) scale(0.8660) translate(-216.00 -274.30) matrix(0.995 0 -0.194 0.99 121.95 279.50)" font-size="173.8" fill="#1d1003" stroke="#1d1003" stroke-width="1" stroke-linejoin="miter" x="0" y="0">好</text>
<text class="hao" transform="translate(216.00 274.30) scale(0.8660) translate(-216.00 -274.30) matrix(0.995 0 -0.194 0.99 124.15 279.50)" font-size="173.8" fill="#1d1003" stroke="#1d1003" stroke-width="1" stroke-linejoin="miter" x="0" y="0">好</text>
<text class="hao" transform="translate(216.00 274.30) scale(0.8756) translate(-216.00 -274.30) matrix(0.995 0 -0.194 0.99 121.95 279.50)" font-size="173.8" fill="#1d1003" stroke="#1d1003" stroke-width="1" stroke-linejoin="miter" x="0" y="0">好</text>
<text class="hao" transform="translate(216.00 274.30) scale(0.8756) translate(-216.00 -274.30) matrix(0.995 0 -0.194 0.99 124.15 279.50)" font-size="173.8" fill="#1d1003" stroke="#1d1003" stroke-width="1" stroke-linejoin="miter" x="0" y="0">好</text>
<text class="hao" transform="translate(216.00 274.30) scale(0.8851) translate(-216.00 -274.30) matrix(0.995 0 -0.194 0.99 121.95 279.50)" font-size="173.8" fill="#1d1003" stroke="#1d1003" stroke-width="1" stroke-linejoin="miter" x="0" y="0">好</text>
<text class="hao" transform="translate(216.00 274.30) scale(0.8851) translate(-216.00 -274.30) matrix(0.995 0 -0.194 0.99 124.15 279.50)" font-size="173.8" fill="#1d1003" stroke="#1d1003" stroke-width="1" stroke-linejoin="miter" x="0" y="0">好</text>
<text class="hao" transform="translate(216.00 274.30) scale(0.8947) translate(-216.00 -274.30) matrix(0.995 0 -0.194 0.99 121.95 279.50)" font-size="173.8" fill="#1d1003" stroke="#1d1003" stroke-width="1" stroke-linejoin="miter" x="0" y="0">好</text>
<text class="hao" transform="translate(216.00 274.30) scale(0.8947) translate(-216.00 -274.30) matrix(0.995 0 -0.194 0.99 124.15 279.50)" font-size="173.8" fill="#1d1003" stroke="#1d1003" stroke-width="1" stroke-linejoin="miter" x="0" y="0">好</text>
<text class="hao" transform="translate(216.00 274.30) scale(0.9043) translate(-216.00 -274.30) matrix(0.995 0 -0.194 0.99 121.95 279.50)" font-size="173.8" fill="#1d1003" stroke="#1d1003" stroke-width="1" stroke-linejoin="miter" x="0" y="0">好</text>
<text class="hao" transform="translate(216.00 274.30) scale(0.9043) translate(-216.00 -274.30) matrix(0.995 0 -0.194 0.99 124.15 279.50)" font-size="173.8" fill="#1d1003" stroke="#1d1003" stroke-width="1" stroke-linejoin="miter" x="0" y="0">好</text>
<text class="hao" transform="translate(216.00 274.30) scale(0.9139) translate(-216.00 -274.30) matrix(0.995 0 -0.194 0.99 121.95 279.50)" font-size="173.8" fill="#1d1003" stroke="#1d1003" stroke-width="1" stroke-linejoin="miter" x="0" y="0">好</text>
<text class="hao" transform="translate(216.00 274.30) scale(0.9139) translate(-216.00 -274.30) matrix(0.995 0 -0.194 0.99 124.15 279.50)" font-size="173.8" fill="#1d1003" stroke="#1d1003" stroke-width="1" stroke-linejoin="miter" x="0" y="0">好</text>
<text class="hao" transform="translate(216.00 274.30) scale(0.9234) translate(-216.00 -274.30) matrix(0.995 0 -0.194 0.99 121.95 279.50)" font-size="173.8" fill="#1d1003" stroke="#1d1003" stroke-width="1" stroke-linejoin="miter" x="0" y="0">好</text>
<text class="hao" transform="translate(216.00 274.30) scale(0.9234) translate(-216.00 -274.30) matrix(0.995 0 -0.194 0.99 124.15 279.50)" font-size="173.8" fill="#1d1003" stroke="#1d1003" stroke-width="1" stroke-linejoin="miter" x="0" y="0">好</text>
<text class="hao" transform="translate(216.00 274.30) scale(0.9330) translate(-216.00 -274.30) matrix(0.995 0 -0.194 0.99 121.95 279.50)" font-size="173.8" fill="#1d1003" stroke="#1d1003" stroke-width="1" stroke-linejoin="miter" x="0" y="0">好</text>
<text class="hao" transform="translate(216.00 274.30) scale(0.9330) translate(-216.00 -274.30) matrix(0.995 0 -0.194 0.99 124.15 279.50)" font-size="173.8" fill="#1d1003" stroke="#1d1003" stroke-width="1" stroke-linejoin="miter" x="0" y="0">好</text>
<text class="hao" transform="translate(216.00 274.30) scale(0.9426) translate(-216.00 -274.30) matrix(0.995 0 -0.194 0.99 121.95 279.50)" font-size="173.8" fill="#1d1003" stroke="#1d1003" stroke-width="1" stroke-linejoin="miter" x="0" y="0">好</text>
<text class="hao" transform="translate(216.00 274.30) scale(0.9426) translate(-216.00 -274.30) matrix(0.995 0 -0.194 0.99 124.15 279.50)" font-size="173.8" fill="#1d1003" stroke="#1d1003" stroke-width="1" stroke-linejoin="miter" x="0" y="0">好</text>
<text class="hao" transform="translate(216.00 274.30) scale(0.9521) translate(-216.00 -274.30) matrix(0.995 0 -0.194 0.99 121.95 279.50)" font-size="173.8" fill="#1d1003" stroke="#1d1003" stroke-width="1" stroke-linejoin="miter" x="0" y="0">好</text>
<text class="hao" transform="translate(216.00 274.30) scale(0.9521) translate(-216.00 -274.30) matrix(0.995 0 -0.194 0.99 124.15 279.50)" font-size="173.8" fill="#1d1003" stroke="#1d1003" stroke-width="1" stroke-linejoin="miter" x="0" y="0">好</text>
<text class="hao" transform="translate(216.00 274.30) scale(0.9617) translate(-216.00 -274.30) matrix(0.995 0 -0.194 0.99 121.95 279.50)" font-size="173.8" fill="#1d1003" stroke="#1d1003" stroke-width="1" stroke-linejoin="miter" x="0" y="0">好</text>
<text class="hao" transform="translate(216.00 274.30) scale(0.9617) translate(-216.00 -274.30) matrix(0.995 0 -0.194 0.99 124.15 279.50)" font-size="173.8" fill="#1d1003" stroke="#1d1003" stroke-width="1" stroke-linejoin="miter" x="0" y="0">好</text>
<text class="hao" transform="translate(216.00 274.30) scale(0.9713) translate(-216.00 -274.30) matrix(0.995 0 -0.194 0.99 121.95 279.50)" font-size="173.8" fill="#1d1003" stroke="#1d1003" stroke-width="1" stroke-linejoin="miter" x="0" y="0">好</text>
<text class="hao" transform="translate(216.00 274.30) scale(0.9713) translate(-216.00 -274.30) matrix(0.995 0 -0.194 0.99 124.15 279.50)" font-size="173.8" fill="#1d1003" stroke="#1d1003" stroke-width="1" stroke-linejoin="miter" x="0" y="0">好</text>
<text class="hao" transform="translate(216.00 274.30) scale(0.9809) translate(-216.00 -274.30) matrix(0.995 0 -0.194 0.99 121.95 279.50)" font-size="173.8" fill="#1d1003" stroke="#1d1003" stroke-width="1" stroke-linejoin="miter" x="0" y="0">好</text>
<text class="hao" transform="translate(216.00 274.30) scale(0.9809) translate(-216.00 -274.30) matrix(0.995 0 -0.194 0.99 124.15 279.50)" font-size="173.8" fill="#1d1003" stroke="#1d1003" stroke-width="1" stroke-linejoin="miter" x="0" y="0">好</text>
<text class="hao" transform="translate(216.00 274.30) scale(0.9904) translate(-216.00 -274.30) matrix(0.995 0 -0.194 0.99 121.95 279.50)" font-size="173.8" fill="#1d1003" stroke="#1d1003" stroke-width="1" stroke-linejoin="miter" x="0" y="0">好</text>
<text class="hao" transform="translate(216.00 274.30) scale(0.9904) translate(-216.00 -274.30) matrix(0.995 0 -0.194 0.99 124.15 279.50)" font-size="173.8" fill="#1d1003" stroke="#1d1003" stroke-width="1" stroke-linejoin="miter" x="0" y="0">好</text>
<text class="hao" transform="translate(216.00 274.30) scale(1.0000) translate(-216.00 -274.30) matrix(0.995 0 -0.194 0.99 121.95 279.50)" font-size="173.8" fill="#e99123" stroke="#e99123" stroke-width="1" stroke-linejoin="miter" x="0" y="0">好</text>
<text class="hao" transform="translate(216.00 274.30) scale(1.0000) translate(-216.00 -274.30) matrix(0.995 0 -0.194 0.99 124.15 279.50)" font-size="173.8" fill="#e99123" stroke="#e99123" stroke-width="1" stroke-linejoin="miter" x="0" y="0">好</text></svg>
</div>
</div>
<div id="cborder"></div>

<div id="menubar"><div id="pslogo">Ps</div><div class="mi" style="left:47px">文件(<u>F</u>)</div><div class="mi" style="left:102px">编辑(<u>E</u>)</div><div class="mi" style="left:157px">图像(<u>I</u>)</div><div class="mi" style="left:209px">图层(<u>L</u>)</div><div class="mi" style="left:264px">文字(<u>Y</u>)</div><div class="mi" style="left:320px">选择(<u>S</u>)</div><div class="mi" style="left:375px">滤镜(<u>T</u>)</div><div class="mi" style="left:430px">3D(<u>D</u>)</div><div class="mi" style="left:478px">视图(<u>V</u>)</div><div class="mi" style="left:535px">窗口(<u>W</u>)</div><div class="mi" style="left:595px">帮助(<u>H</u>)</div></div><div id="optbar"><div class="abs" style="left:4px;top:6px;width:4px;height:20px;background:repeating-linear-gradient(180deg,#333 0 1px,transparent 1px 2px)"></div><svg width="22" height="18" viewBox="0 0 22 18" style="left:21px;top:7px"><path d="M1.5 1 v11 l3.2 -3.5 h5.2z" fill="#a9a9a9"/><path d="M13 7.5 v9 M8.5 12 h9 M13 7 l-1.8 2 h3.6z M13 17 l-1.8 -2 h3.6z M8 12 l2 -1.8 v3.6z M18 12 l-2 -1.8 v3.6z" stroke="#cfcfcf" stroke-width="1" fill="#cfcfcf"/></svg><div class="abs" style="left:47px;top:14px;width:0;height:0;border:3px solid transparent;border-top:4px solid #e6e6e6;border-bottom:none"></div><div class="vsep" style="left:59px;top:4px;height:23px"></div><div class="chk" style="left:67px;top:8px"></div><svg width="16" height="16" viewBox="0 0 16 16" style="left:68px;top:5px"><path d="M2.5 8.5 l3.2 3.8 l7.3 -10" fill="none" stroke="#e8e8e8" stroke-width="1.7"/></svg><div class="t" style="left:87px">自动选择：</div><div class="sel" style="left:152px;top:5px;width:56px;height:20px"><span class="lab" style="left:8px">组</span><span class="ud" style="right:3px"></span></div><div class="vsep" style="left:217px;top:4px;height:23px"></div><div class="chk" style="left:227px;top:8px;border-color:#3f3f3f;background:#5c5c5c"></div><div class="t dis" style="left:246px">显示变换控件</div><div class="vsep" style="left:332px;top:4px;height:23px"></div><svg width="18" height="18" viewBox="0 0 18 18" style="left:346px;top:7px"><rect x="0" y="1" width="14" height="1" fill="#9c9c9c"/><rect x="1.5" y="3.5" width="4" height="10" fill="none" stroke="#9c9c9c"/><rect x="8" y="3" width="5" height="7" fill="#9c9c9c"/></svg><svg width="18" height="18" viewBox="0 0 18 18" style="left:369px;top:7px"><rect x="0" y="8" width="16" height="1" fill="#9c9c9c"/><rect x="2.5" y="3.5" width="4" height="10" fill="#535353" stroke="#9c9c9c"/><rect x="9" y="5" width="5" height="7" fill="#9c9c9c"/></svg><svg width="18" height="18" viewBox="0 0 18 18" style="left:394px;top:7px"><rect x="0" y="14" width="14" height="1" fill="#9c9c9c"/><rect x="1.5" y="2.5" width="4" height="10" fill="none" stroke="#9c9c9c"/><rect x="8" y="6" width="5" height="7" fill="#9c9c9c"/></svg><svg width="18" height="18" viewBox="0 0 18 18" style="left:426px;top:7px"><rect x="0" y="1" width="1" height="15" fill="#9c9c9c"/><rect x="2" y="3" width="7" height="4" fill="#9c9c9c"/><rect x="2.5" y="9.5" width="10" height="4" fill="none" stroke="#9c9c9c"/></svg><svg width="18" height="18" viewBox="0 0 18 18" style="left:451px;top:7px"><rect x="6" y="0" width="1" height="16" fill="#9c9c9c"/><rect x="3" y="3" width="7" height="4" fill="#9c9c9c"/><rect x="1.5" y="9.5" width="10" height="4" fill="#535353" stroke="#9c9c9c"/></svg><svg width="18" height="18" viewBox="0 0 18 18" style="left:474px;top:7px"><rect x="13" y="1" width="1" height="15" fill="#9c9c9c"/><rect x="5" y="3" width="7" height="4" fill="#9c9c9c"/><rect x="1.5" y="9.5" width="10" height="4" fill="none" stroke="#9c9c9c"/></svg><svg width="18" height="18" viewBox="0 0 18 18" style="left:514px;top:7px"><rect x="0" y="2" width="16" height="1" fill="#9c9c9c"/><rect x="5" y="3" width="6" height="3" fill="#9c9c9c"/><rect x="0" y="9" width="16" height="1" fill="#9c9c9c"/><rect x="3.5" y="10.5" width="9" height="3" fill="none" stroke="#9c9c9c"/></svg><svg width="18" height="18" viewBox="0 0 18 18" style="left:538px;top:7px"><rect x="0" y="4" width="16" height="1" fill="#9c9c9c"/><rect x="5" y="2" width="6" height="4" fill="#9c9c9c"/><rect x="0" y="11" width="16" height="1" fill="#9c9c9c"/><rect x="3.5" y="9.5" width="9" height="4" fill="#535353" stroke="#9c9c9c"/></svg><svg width="18" height="18" viewBox="0 0 18 18" style="left:562px;top:7px"><rect x="0" y="6" width="16" height="1" fill="#9c9c9c"/><rect x="5" y="3" width="6" height="3" fill="#9c9c9c"/><rect x="0" y="13" width="16" height="1" fill="#9c9c9c"/><rect x="3.5" y="9.5" width="9" height="3" fill="none" stroke="#9c9c9c"/></svg><svg width="18" height="18" viewBox="0 0 18 18" style="left:596px;top:7px"><rect x="1" y="1" width="1" height="16" fill="#9c9c9c"/><rect x="8" y="1" width="1" height="16" fill="#9c9c9c"/><rect x="2.5" y="4.5" width="3" height="9" fill="none" stroke="#9c9c9c"/><rect x="9" y="6" width="4" height="6" fill="#9c9c9c"/></svg><svg width="18" height="18" viewBox="0 0 18 18" style="left:620px;top:7px"><rect x="3" y="1" width="1" height="16" fill="#9c9c9c"/><rect x="10" y="1" width="1" height="16" fill="#9c9c9c"/><rect x="1.5" y="4.5" width="4" height="9" fill="#535353" stroke="#9c9c9c"/><rect x="8" y="6" width="5" height="6" fill="#9c9c9c"/></svg><svg width="18" height="18" viewBox="0 0 18 18" style="left:644px;top:7px"><rect x="5" y="1" width="1" height="16" fill="#9c9c9c"/><rect x="12" y="1" width="1" height="16" fill="#9c9c9c"/><rect x="1.5" y="4.5" width="3" height="9" fill="none" stroke="#9c9c9c"/><rect x="8" y="6" width="4" height="6" fill="#9c9c9c"/></svg><svg width="18" height="18" viewBox="0 0 18 18" style="left:683px;top:7px"><rect x="1" y="1" width="5" height="4" fill="#9c9c9c"/><rect x="11" y="1" width="5" height="4" fill="#9c9c9c"/><rect x="1.5" y="7.5" width="4" height="8" fill="none" stroke="#9c9c9c"/><rect x="11.5" y="7.5" width="4" height="8" fill="none" stroke="#9c9c9c"/><rect x="8" y="1" width="1" height="15" fill="#9c9c9c"/></svg><div class="vsep" style="left:501px;top:4px;height:23px"></div><div class="vsep" style="left:670px;top:4px;height:23px"></div><div class="vsep" style="left:712px;top:0;height:31px;background:#666;box-shadow:-1px 0 0 #3c3c3c"></div><div class="t" style="left:723px">3D 模式：</div><div class="abs" style="left:782px;top:4px;width:23px;height:23px;background:#393939;border-radius:3px;border:1px solid #444"></div><svg width="22" height="20" viewBox="0 0 22 20" style="left:783px;top:6px"><ellipse cx="10.5" cy="12" rx="8" ry="4.2" fill="none" stroke="#d6d6d6" stroke-width="1.3"/><circle cx="11.5" cy="6.5" r="3.6" fill="#9a9a9a" stroke="#d6d6d6" stroke-width="1"/><path d="M5 13.5 l5.5 2.8 l-5 1.4z" fill="#d6d6d6"/></svg><svg width="20" height="20" viewBox="0 0 20 20" style="left:808px;top:6px"><circle cx="9.5" cy="10" r="7.3" fill="none" stroke="#d6d6d6" stroke-width="1.2"/><circle cx="9.5" cy="10" r="3.6" fill="#9a9a9a" stroke="#d6d6d6" stroke-width="1"/><path d="M2 6 l4.5 -3.5 l0.5 4.5z" fill="#d6d6d6"/></svg><svg width="20" height="20" viewBox="0 0 20 20" style="left:832px;top:6px"><path d="M9.5 1.5 l3 3.2 h-1.9 v3.7 h3.7 v-1.9 l3.2 3 l-3.2 3 v-1.9 h-3.7 v3.7 h1.9 l-3 3.2 l-3 -3.2 h1.9 v-3.7 h-3.7 v1.9 l-3.2 -3 l3.2 -3 v1.9 h3.7 v-3.7 h-1.9z" fill="none" stroke="#d6d6d6" stroke-width="1.1" stroke-linejoin="round"/></svg><svg width="20" height="20" viewBox="0 0 20 20" style="left:856px;top:6px"><circle cx="9.5" cy="9.5" r="3" fill="#9a9a9a" stroke="#d6d6d6" stroke-width="1"/><path d="M9.5 2 l3 3.2 h-6z M9.5 18.5 l4 -3.8 h-8z M0.8 9.5 l3.6 -3.2 v6.4z M18.2 9.5 l-3.6 -3.2 v6.4z" fill="#d6d6d6"/></svg><svg width="22" height="20" viewBox="0 0 22 20" style="left:880px;top:6px"><rect x="0.5" y="6" width="8" height="7" rx="1" fill="#d6d6d6"/><path d="M8.5 9.5 l3 -3 v6z" fill="#d6d6d6"/><path d="M19 3.5 l-5.5 6 l5.5 6" fill="none" stroke="#d6d6d6" stroke-width="1.1"/></svg></div><div id="tabstrip"><div id="doctab"><span class="tt">未标题-1 @ 66.7% (好, RGB/8) *</span><svg width="8" height="8" viewBox="0 0 8 8" style="left:189px;top:5px"><path d="M1 1 L7 7 M7 1 L1 7" stroke="#f0f0f0" stroke-width="1.6"/></svg></div></div><div id="hruler"><span class="rl" style="left:10.0px;top:2px">16</span><span class="rl" style="left:48.0px;top:2px">14</span><span class="rl" style="left:86.0px;top:2px">12</span><span class="rl" style="left:124.0px;top:2px">10</span><span class="rl" style="left:162.0px;top:2px">8</span><span class="rl" style="left:199.0px;top:2px">6</span><span class="rl" style="left:237.0px;top:2px">4</span><span class="rl" style="left:275.0px;top:2px">2</span><span class="rl" style="left:313.0px;top:2px">0</span><span class="rl" style="left:351.0px;top:2px">2</span><span class="rl" style="left:389.0px;top:2px">4</span><span class="rl" style="left:427.0px;top:2px">6</span><span class="rl" style="left:464.0px;top:2px">8</span><span class="rl" style="left:502.0px;top:2px">10</span><span class="rl" style="left:540.0px;top:2px">12</span><span class="rl" style="left:578.0px;top:2px">14</span><span class="rl" style="left:616.0px;top:2px">16</span><span class="rl" style="left:654.0px;top:2px">18</span><span class="rl" style="left:692.0px;top:2px">20</span><span class="rl" style="left:729.0px;top:2px">22</span><span class="rl" style="left:767.0px;top:2px">24</span><span class="rl" style="left:805.0px;top:2px">26</span><span class="rl" style="left:843.0px;top:2px">28</span><span class="rl" style="left:881.0px;top:2px">30</span><span class="rl" style="left:919.0px;top:2px">32</span><span class="rl" style="left:957.0px;top:2px">34</span><span class="rl" style="left:994.0px;top:2px">36</span><span class="rl" style="left:1032.0px;top:2px">38</span><svg width="1037" height="17" viewBox="0 0 1037 17" style="left:0;top:0" shape-rendering="crispEdges"><rect x="6.0" y="0" width="1" height="16" fill="#7e7e7e"/><rect x="16.0" y="13" width="1" height="3" fill="#7e7e7e"/><rect x="25.0" y="11" width="1" height="5" fill="#7e7e7e"/><rect x="34.0" y="13" width="1" height="3" fill="#7e7e7e"/><rect x="44.0" y="0" width="1" height="16" fill="#7e7e7e"/><rect x="53.0" y="13" width="1" height="3" fill="#7e7e7e"/><rect x="63.0" y="11" width="1" height="5" fill="#7e7e7e"/><rect x="72.0" y="13" width="1" height="3" fill="#7e7e7e"/><rect x="82.0" y="0" width="1" height="16" fill="#7e7e7e"/><rect x="91.0" y="13" width="1" height="3" fill="#7e7e7e"/><rect x="101.0" y="11" width="1" height="5" fill="#7e7e7e"/><rect x="110.0" y="13" width="1" height="3" fill="#7e7e7e"/><rect x="120.0" y="0" width="1" height="16" fill="#7e7e7e"/><rect x="129.0" y="13" width="1" height="3" fill="#7e7e7e"/><rect x="139.0" y="11" width="1" height="5" fill="#7e7e7e"/><rect x="148.0" y="13" width="1" height="3" fill="#7e7e7e"/><rect x="158.0" y="0" width="1" height="16" fill="#7e7e7e"/><rect x="167.0" y="13" width="1" height="3" fill="#7e7e7e"/><rect x="176.0" y="11" width="1" height="5" fill="#7e7e7e"/><rect x="186.0" y="13" width="1" height="3" fill="#7e7e7e"/><rect x="195.0" y="0" width="1" height="16" fill="#7e7e7e"/><rect x="205.0" y="13" width="1" height="3" fill="#7e7e7e"/><rect x="214.0" y="11" width="1" height="5" fill="#7e7e7e"/><rect x="224.0" y="13" width="1" height="3" fill="#7e7e7e"/><rect x="233.0" y="0" width="1" height="16" fill="#7e7e7e"/><rect x="243.0" y="13" width="1" height="3" fill="#7e7e7e"/><rect x="252.0" y="11" width="1" height="5" fill="#7e7e7e"/><rect x="262.0" y="13" width="1" height="3" fill="#7e7e7e"/><rect x="271.0" y="0" width="1" height="16" fill="#7e7e7e"/><rect x="281.0" y="13" width="1" height="3" fill="#7e7e7e"/><rect x="290.0" y="11" width="1" height="5" fill="#7e7e7e"/><rect x="299.0" y="13" width="1" height="3" fill="#7e7e7e"/><rect x="309.0" y="0" width="1" height="16" fill="#7e7e7e"/><rect x="318.0" y="13" width="1" height="3" fill="#7e7e7e"/><rect x="328.0" y="11" width="1" height="5" fill="#7e7e7e"/><rect x="337.0" y="13" width="1" height="3" fill="#7e7e7e"/><rect x="347.0" y="0" width="1" height="16" fill="#7e7e7e"/><rect x="356.0" y="13" width="1" height="3" fill="#7e7e7e"/><rect x="366.0" y="11" width="1" height="5" fill="#7e7e7e"/><rect x="375.0" y="13" width="1" height="3" fill="#7e7e7e"/><rect x="385.0" y="0" width="1" height="16" fill="#7e7e7e"/><rect x="394.0" y="13" width="1" height="3" fill="#7e7e7e"/><rect x="404.0" y="11" width="1" height="5" fill="#7e7e7e"/><rect x="413.0" y="13" width="1" height="3" fill="#7e7e7e"/><rect x="423.0" y="0" width="1" height="16" fill="#7e7e7e"/><rect x="432.0" y="13" width="1" height="3" fill="#7e7e7e"/><rect x="441.0" y="11" width="1" height="5" fill="#7e7e7e"/><rect x="451.0" y="13" width="1" height="3" fill="#7e7e7e"/><rect x="460.0" y="0" width="1" height="16" fill="#7e7e7e"/><rect x="470.0" y="13" width="1" height="3" fill="#7e7e7e"/><rect x="479.0" y="11" width="1" height="5" fill="#7e7e7e"/><rect x="489.0" y="13" width="1" height="3" fill="#7e7e7e"/><rect x="498.0" y="0" width="1" height="16" fill="#7e7e7e"/><rect x="508.0" y="13" width="1" height="3" fill="#7e7e7e"/><rect x="517.0" y="11" width="1" height="5" fill="#7e7e7e"/><rect x="527.0" y="13" width="1" height="3" fill="#7e7e7e"/><rect x="536.0" y="0" width="1" height="16" fill="#7e7e7e"/><rect x="546.0" y="13" width="1" height="3" fill="#7e7e7e"/><rect x="555.0" y="11" width="1" height="5" fill="#7e7e7e"/><rect x="565.0" y="13" width="1" height="3" fill="#7e7e7e"/><rect x="574.0" y="0" width="1" height="16" fill="#7e7e7e"/><rect x="583.0" y="13" width="1" height="3" fill="#7e7e7e"/><rect x="593.0" y="11" width="1" height="5" fill="#7e7e7e"/><rect x="602.0" y="13" width="1" height="3" fill="#7e7e7e"/><rect x="612.0" y="0" width="1" height="16" fill="#7e7e7e"/><rect x="621.0" y="13" width="1" height="3" fill="#7e7e7e"/><rect x="631.0" y="11" width="1" height="5" fill="#7e7e7e"/><rect x="640.0" y="13" width="1" height="3" fill="#7e7e7e"/><rect x="650.0" y="0" width="1" height="16" fill="#7e7e7e"/><rect x="659.0" y="13" width="1" height="3" fill="#7e7e7e"/><rect x="669.0" y="11" width="1" height="5" fill="#7e7e7e"/><rect x="678.0" y="13" width="1" height="3" fill="#7e7e7e"/><rect x="688.0" y="0" width="1" height="16" fill="#7e7e7e"/><rect x="697.0" y="13" width="1" height="3" fill="#7e7e7e"/><rect x="706.0" y="11" width="1" height="5" fill="#7e7e7e"/><rect x="716.0" y="13" width="1" height="3" fill="#7e7e7e"/><rect x="725.0" y="0" width="1" height="16" fill="#7e7e7e"/><rect x="735.0" y="13" width="1" height="3" fill="#7e7e7e"/><rect x="744.0" y="11" width="1" height="5" fill="#7e7e7e"/><rect x="754.0" y="13" width="1" height="3" fill="#7e7e7e"/><rect x="763.0" y="0" width="1" height="16" fill="#7e7e7e"/><rect x="773.0" y="13" width="1" height="3" fill="#7e7e7e"/><rect x="782.0" y="11" width="1" height="5" fill="#7e7e7e"/><rect x="792.0" y="13" width="1" height="3" fill="#7e7e7e"/><rect x="801.0" y="0" width="1" height="16" fill="#7e7e7e"/><rect x="811.0" y="13" width="1" height="3" fill="#7e7e7e"/><rect x="820.0" y="11" width="1" height="5" fill="#7e7e7e"/><rect x="830.0" y="13" width="1" height="3" fill="#7e7e7e"/><rect x="839.0" y="0" width="1" height="16" fill="#7e7e7e"/><rect x="848.0" y="13" width="1" height="3" fill="#7e7e7e"/><rect x="858.0" y="11" width="1" height="5" fill="#7e7e7e"/><rect x="867.0" y="13" width="1" height="3" fill="#7e7e7e"/><rect x="877.0" y="0" width="1" height="16" fill="#7e7e7e"/><rect x="886.0" y="13" width="1" height="3" fill="#7e7e7e"/><rect x="896.0" y="11" width="1" height="5" fill="#7e7e7e"/><rect x="905.0" y="13" width="1" height="3" fill="#7e7e7e"/><rect x="915.0" y="0" width="1" height="16" fill="#7e7e7e"/><rect x="924.0" y="13" width="1" height="3" fill="#7e7e7e"/><rect x="934.0" y="11" width="1" height="5" fill="#7e7e7e"/><rect x="943.0" y="13" width="1" height="3" fill="#7e7e7e"/><rect x="953.0" y="0" width="1" height="16" fill="#7e7e7e"/><rect x="962.0" y="13" width="1" height="3" fill="#7e7e7e"/><rect x="972.0" y="11" width="1" height="5" fill="#7e7e7e"/><rect x="981.0" y="13" width="1" height="3" fill="#7e7e7e"/><rect x="990.0" y="0" width="1" height="16" fill="#7e7e7e"/><rect x="1000.0" y="13" width="1" height="3" fill="#7e7e7e"/><rect x="1009.0" y="11" width="1" height="5" fill="#7e7e7e"/><rect x="1019.0" y="13" width="1" height="3" fill="#7e7e7e"/><rect x="1028.0" y="0" width="1" height="16" fill="#7e7e7e"/><rect x="1038.0" y="13" width="1" height="3" fill="#7e7e7e"/></svg></div><div id="vruler"><span class="rl" style="left:3px;top:-16.0px">6</span><span class="rl" style="left:3px;top:22.0px">4</span><span class="rl" style="left:3px;top:60.0px">2</span><span class="rl" style="left:3px;top:98.0px">0</span><span class="rl" style="left:3px;top:136.0px">2</span><span class="rl" style="left:3px;top:173.0px">4</span><span class="rl" style="left:3px;top:211.0px">6</span><span class="rl" style="left:3px;top:249.0px">8</span><span class="rl" style="left:3px;top:287.0px">1</span><span class="rl" style="left:3px;top:297.0px">0</span><span class="rl" style="left:3px;top:325.0px">1</span><span class="rl" style="left:3px;top:335.0px">2</span><span class="rl" style="left:3px;top:363.0px">1</span><span class="rl" style="left:3px;top:373.0px">4</span><span class="rl" style="left:3px;top:401.0px">1</span><span class="rl" style="left:3px;top:411.0px">6</span><span class="rl" style="left:3px;top:438.0px">1</span><span class="rl" style="left:3px;top:448.0px">8</span><span class="rl" style="left:3px;top:476.0px">2</span><span class="rl" style="left:3px;top:486.0px">0</span><span class="rl" style="left:3px;top:514.0px">2</span><span class="rl" style="left:3px;top:524.0px">2</span><span class="rl" style="left:3px;top:552.0px">2</span><span class="rl" style="left:3px;top:562.0px">4</span><span class="rl" style="left:3px;top:590.0px">2</span><span class="rl" style="left:3px;top:600.0px">6</span><span class="rl" style="left:3px;top:628.0px">2</span><span class="rl" style="left:3px;top:638.0px">8</span><span class="rl" style="left:3px;top:666.0px">3</span><span class="rl" style="left:3px;top:676.0px">0</span><span class="rl" style="left:3px;top:703.0px">3</span><span class="rl" style="left:3px;top:713.0px">2</span><svg width="17" height="718" viewBox="0 0 17 718" style="left:0;top:0" shape-rendering="crispEdges"><rect x="0" y="-19.0" width="16" height="1" fill="#7e7e7e"/><rect x="13" y="-9.0" width="3" height="1" fill="#7e7e7e"/><rect x="11" y="0.0" width="5" height="1" fill="#7e7e7e"/><rect x="13" y="10.0" width="3" height="1" fill="#7e7e7e"/><rect x="0" y="19.0" width="16" height="1" fill="#7e7e7e"/><rect x="13" y="28.0" width="3" height="1" fill="#7e7e7e"/><rect x="11" y="38.0" width="5" height="1" fill="#7e7e7e"/><rect x="13" y="47.0" width="3" height="1" fill="#7e7e7e"/><rect x="0" y="57.0" width="16" height="1" fill="#7e7e7e"/><rect x="13" y="66.0" width="3" height="1" fill="#7e7e7e"/><rect x="11" y="76.0" width="5" height="1" fill="#7e7e7e"/><rect x="13" y="85.0" width="3" height="1" fill="#7e7e7e"/><rect x="0" y="95.0" width="16" height="1" fill="#7e7e7e"/><rect x="13" y="104.0" width="3" height="1" fill="#7e7e7e"/><rect x="11" y="114.0" width="5" height="1" fill="#7e7e7e"/><rect x="13" y="123.0" width="3" height="1" fill="#7e7e7e"/><rect x="0" y="133.0" width="16" height="1" fill="#7e7e7e"/><rect x="13" y="142.0" width="3" height="1" fill="#7e7e7e"/><rect x="11" y="151.0" width="5" height="1" fill="#7e7e7e"/><rect x="13" y="161.0" width="3" height="1" fill="#7e7e7e"/><rect x="0" y="170.0" width="16" height="1" fill="#7e7e7e"/><rect x="13" y="180.0" width="3" height="1" fill="#7e7e7e"/><rect x="11" y="189.0" width="5" height="1" fill="#7e7e7e"/><rect x="13" y="199.0" width="3" height="1" fill="#7e7e7e"/><rect x="0" y="208.0" width="16" height="1" fill="#7e7e7e"/><rect x="13" y="218.0" width="3" height="1" fill="#7e7e7e"/><rect x="11" y="227.0" width="5" height="1" fill="#7e7e7e"/><rect x="13" y="237.0" width="3" height="1" fill="#7e7e7e"/><rect x="0" y="246.0" width="16" height="1" fill="#7e7e7e"/><rect x="13" y="256.0" width="3" height="1" fill="#7e7e7e"/><rect x="11" y="265.0" width="5" height="1" fill="#7e7e7e"/><rect x="13" y="275.0" width="3" height="1" fill="#7e7e7e"/><rect x="0" y="284.0" width="16" height="1" fill="#7e7e7e"/><rect x="13" y="293.0" width="3" height="1" fill="#7e7e7e"/><rect x="11" y="303.0" width="5" height="1" fill="#7e7e7e"/><rect x="13" y="312.0" width="3" height="1" fill="#7e7e7e"/><rect x="0" y="322.0" width="16" height="1" fill="#7e7e7e"/><rect x="13" y="331.0" width="3" height="1" fill="#7e7e7e"/><rect x="11" y="341.0" width="5" height="1" fill="#7e7e7e"/><rect x="13" y="350.0" width="3" height="1" fill="#7e7e7e"/><rect x="0" y="360.0" width="16" height="1" fill="#7e7e7e"/><rect x="13" y="369.0" width="3" height="1" fill="#7e7e7e"/><rect x="11" y="379.0" width="5" height="1" fill="#7e7e7e"/><rect x="13" y="388.0" width="3" height="1" fill="#7e7e7e"/><rect x="0" y="398.0" width="16" height="1" fill="#7e7e7e"/><rect x="13" y="407.0" width="3" height="1" fill="#7e7e7e"/><rect x="11" y="417.0" width="5" height="1" fill="#7e7e7e"/><rect x="13" y="426.0" width="3" height="1" fill="#7e7e7e"/><rect x="0" y="435.0" width="16" height="1" fill="#7e7e7e"/><rect x="13" y="445.0" width="3" height="1" fill="#7e7e7e"/><rect x="11" y="454.0" width="5" height="1" fill="#7e7e7e"/><rect x="13" y="464.0" width="3" height="1" fill="#7e7e7e"/><rect x="0" y="473.0" width="16" height="1" fill="#7e7e7e"/><rect x="13" y="483.0" width="3" height="1" fill="#7e7e7e"/><rect x="11" y="492.0" width="5" height="1" fill="#7e7e7e"/><rect x="13" y="502.0" width="3" height="1" fill="#7e7e7e"/><rect x="0" y="511.0" width="16" height="1" fill="#7e7e7e"/><rect x="13" y="521.0" width="3" height="1" fill="#7e7e7e"/><rect x="11" y="530.0" width="5" height="1" fill="#7e7e7e"/><rect x="13" y="540.0" width="3" height="1" fill="#7e7e7e"/><rect x="0" y="549.0" width="16" height="1" fill="#7e7e7e"/><rect x="13" y="558.0" width="3" height="1" fill="#7e7e7e"/><rect x="11" y="568.0" width="5" height="1" fill="#7e7e7e"/><rect x="13" y="577.0" width="3" height="1" fill="#7e7e7e"/><rect x="0" y="587.0" width="16" height="1" fill="#7e7e7e"/><rect x="13" y="596.0" width="3" height="1" fill="#7e7e7e"/><rect x="11" y="606.0" width="5" height="1" fill="#7e7e7e"/><rect x="13" y="615.0" width="3" height="1" fill="#7e7e7e"/><rect x="0" y="625.0" width="16" height="1" fill="#7e7e7e"/><rect x="13" y="634.0" width="3" height="1" fill="#7e7e7e"/><rect x="11" y="644.0" width="5" height="1" fill="#7e7e7e"/><rect x="13" y="653.0" width="3" height="1" fill="#7e7e7e"/><rect x="0" y="663.0" width="16" height="1" fill="#7e7e7e"/><rect x="13" y="672.0" width="3" height="1" fill="#7e7e7e"/><rect x="11" y="682.0" width="5" height="1" fill="#7e7e7e"/><rect x="13" y="691.0" width="3" height="1" fill="#7e7e7e"/><rect x="0" y="700.0" width="16" height="1" fill="#7e7e7e"/><rect x="13" y="710.0" width="3" height="1" fill="#7e7e7e"/><rect x="11" y="719.0" width="5" height="1" fill="#7e7e7e"/></svg></div><div id="rcorner"><svg width="17" height="17" viewBox="0 0 17 17" style="left:0;top:0"><path d="M0 12.5 H17 M12.5 0 V17" stroke="#606060" stroke-width="1" stroke-dasharray="1 1"/></svg></div><div id="tgap"></div><div id="toolbar"><div class="hd"><svg width="10" height="7" viewBox="0 0 10 7" style="left:4px;top:3px"><path d="M0 0 l4 3.5 l-4 3.5z M5 0 l4 3.5 l-4 3.5z" fill="#d0d0d0"/></svg></div><div class="grip" style="left:9px;top:16px;width:20px"></div><div class="abs" style="left:3px;top:28px;width:32px;height:25px;background:#3a3a3a;border-radius:3px;border:1px solid #484848"></div><svg width="26" height="24" viewBox="0 0 26 24" style="left:6px;top:28.0px"><path d="M4 4 v12 l3.4 -3.8 h5.6z" fill="#b4b4b4"/><path d="M16 10 v10 M11 15 h10 M16 9.5 l-2 2.2 h4z M16 20.5 l-2 -2.2 h4z M10.5 15 l2.2 -2 v4z M21.500 15 l-2.2 -2 v4z" stroke="#cfcfcf" stroke-width="1" fill="#cfcfcf"/></svg><svg width="26" height="24" viewBox="0 0 26 24" style="left:6px;top:53.0px"><rect x="6.5" y="5.5" width="13" height="13" fill="none" stroke="#cfcfcf" stroke-width="1.2" stroke-dasharray="3 2"/></svg><div class="corner" style="left:28px;top:72.0px"></div><svg width="26" height="24" viewBox="0 0 26 24" style="left:6px;top:79.0px"><path d="M5 4 l13 2 l1 7 l-10 3 z" fill="none" stroke="#cfcfcf" stroke-width="1.4"/><path d="M12 8 h5 v4 h-5" fill="none" stroke="#cfcfcf" stroke-width="1.6"/><path d="M8 14 l-1 6" stroke="#cfcfcf" stroke-width="1.2"/></svg><div class="corner" style="left:28px;top:98.0px"></div><svg width="26" height="24" viewBox="0 0 26 24" style="left:6px;top:105.0px"><path d="M11 10 l9 9" stroke="#cfcfcf" stroke-width="2.2"/><path d="M10 3 v12 M4 9 h12 M5.800 4.800 l8.400 8.400 M14.200 4.800 l-8.400 8.400" stroke="#cfcfcf" stroke-width="1.3"/></svg><div class="corner" style="left:28px;top:124.0px"></div><svg width="26" height="24" viewBox="0 0 26 24" style="left:6px;top:131.0px"><path d="M8 3 v14 h13 M4 8 h13 v13" fill="none" stroke="#cfcfcf" stroke-width="2"/><path d="M9 16 l10 -11" stroke="#cfcfcf" stroke-width="1"/></svg><div class="corner" style="left:28px;top:150.0px"></div><svg width="26" height="24" viewBox="0 0 26 24" style="left:6px;top:157.0px"><path d="M6 20 l1 -3.500 l7 -7 l2.500 2.500 l-7 7z" fill="none" stroke="#cfcfcf" stroke-width="1.2"/><path d="M13 8 l5 5 M15 9 l3 -4 q2 -1 3 0.500 q1 1.500 -0.500 3 l-3.500 2.500z" stroke="#cfcfcf" stroke-width="1.6" fill="#cfcfcf"/></svg><div class="corner" style="left:28px;top:176.0px"></div><div class="tsep" style="top:184px"></div><svg width="26" height="24" viewBox="0 0 26 24" style="left:6px;top:186.0px"><rect x="6" y="6" width="14" height="12" rx="3" fill="#a8a8a8" stroke="#cfcfcf" stroke-width="1.2" stroke-dasharray="2 1.500"/></svg><div class="corner" style="left:28px;top:205.0px"></div><svg width="26" height="24" viewBox="0 0 26 24" style="left:6px;top:212.0px"><path d="M21 3 l-9 11 l2.500 2 z" fill="#cfcfcf"/><path d="M11 15 q-4 -1 -5 3 q-1 2 -3 2.500 q6 2 9 -1.500 q1 -2 -1 -4z" fill="#cfcfcf"/></svg><div class="corner" style="left:28px;top:231.0px"></div><svg width="26" height="24" viewBox="0 0 26 24" style="left:6px;top:238.0px"><path d="M13 4 a3 3 0 0 1 3 3 q0 2 -1.500 4 h5.500 v4 h-14 v-4 h5.500 q-1.500 -2 -1.500 -4 a3 3 0 0 1 3 -3z" fill="#cfcfcf"/><rect x="6" y="17" width="14" height="2" fill="#cfcfcf"/><path d="M1 3 h3 v3 h-3z M4 6 h3 v3 h-3z M1 9 h3 v0 M7 3 h0" fill="#eee"/></svg><div class="corner" style="left:28px;top:257.0px"></div><svg width="26" height="24" viewBox="0 0 26 24" style="left:6px;top:264.0px"><path d="M21 4 l-8 10 l2.200 1.800 z" fill="#cfcfcf"/><path d="M12 15 q-3 -1 -4 2 q-1 2 -3 2.500 q5 1.500 7.500 -1 q1 -2 -0.500 -3.500z" fill="#cfcfcf"/><path d="M4 8 q4 -5 10 -3" fill="none" stroke="#cfcfcf" stroke-width="1.5"/><path d="M3 4 v5 h5z" fill="#cfcfcf"/></svg><div class="corner" style="left:28px;top:283.0px"></div><svg width="26" height="24" viewBox="0 0 26 24" style="left:6px;top:290.0px"><path d="M4 14 l7 -8 h11 l-7 8z" fill="#b0b0b0" stroke="#cfcfcf" stroke-width="1"/><path d="M4 14 v5 h11 v-5 M15 19 l7 -8 v-5" fill="#8a8a8a" stroke="#cfcfcf" stroke-width="1"/></svg><div class="corner" style="left:28px;top:309.0px"></div><svg width="26" height="24" viewBox="0 0 26 24" style="left:6px;top:316.0px"><path d="M5 11 l8 -5 l7 8 l-8 6 q-3 1 -5 -2z" fill="#a8a8a8" stroke="#cfcfcf" stroke-width="1.200"/><path d="M9 9 v-5 q2 -3 4 0 v6" fill="none" stroke="#cfcfcf" stroke-width="1.3"/><path d="M20 13 q2 3 1.500 6 q-1.500 1 -2.500 -0.500z" fill="#cfcfcf"/></svg><div class="corner" style="left:28px;top:335.0px"></div><svg width="26" height="24" viewBox="0 0 26 24" style="left:6px;top:342.0px"><path d="M13 3 q7 9 6 13 q-1 5 -6 5 q-5 0 -6 -5 q-1 -4 6 -13z" fill="#b4b4b4"/></svg><div class="corner" style="left:28px;top:361.0px"></div><svg width="26" height="24" viewBox="0 0 26 24" style="left:6px;top:368.0px"><path d="M4 10 q2 -6 10 -5 q6 1 9 8 v6 l-4 -3 q-6 4 -12 1 q-4 -2 -3 -7z" fill="#b4b4b4"/><ellipse cx="10" cy="12" rx="3" ry="2.500" fill="#535353"/></svg><div class="corner" style="left:28px;top:387.0px"></div><div class="tsep" style="top:395px"></div><svg width="26" height="24" viewBox="0 0 26 24" style="left:6px;top:398.0px"><path d="M5 20 l3 -9 l7 -5 l5 5 l-5 7z" fill="none" stroke="#cfcfcf" stroke-width="1.4"/><path d="M5 20 l6 -6" stroke="#cfcfcf" stroke-width="1"/><path d="M15 4 l6 6 l2 -2 l-6 -6z" fill="#cfcfcf"/></svg><div class="corner" style="left:28px;top:417.0px"></div><div class="abs" style="left:12px;top:422px;width:16px;font-family:'Liberation Serif',serif;font-size:25px;line-height:28px;color:#d4d4d4;text-align:center">T</div><div class="corner" style="left:28px;top:443px"></div><svg width="26" height="24" viewBox="0 0 26 24" style="left:6px;top:450.0px"><path d="M8 2 v17 l4 -4 l3 6.500 l2.500 -1.200 l-3 -6.300 h5.500z" fill="#2a2a2a" stroke="#e0e0e0" stroke-width="1.2"/></svg><div class="corner" style="left:28px;top:469.0px"></div><svg width="26" height="24" viewBox="0 0 26 24" style="left:6px;top:476.0px"><rect x="5.500" y="5.500" width="15" height="12" fill="#8e8e8e" stroke="#cfcfcf" stroke-width="1"/></svg><div class="corner" style="left:28px;top:495.0px"></div><div class="tsep" style="top:502px"></div><svg width="26" height="24" viewBox="0 0 26 24" style="left:6px;top:505.0px"><path d="M7 21 q-3 -4 -4.500 -8 q0 -2 2 -1 l2.500 3 v-9 q1 -2 2 0 v5 v-7 q1 -2 2.200 0 v7 v-6.500 q1 -2 2.200 0 v7 v-5 q1 -1.800 2 0 v9 q0 4 -2 6z" fill="#c8c8c8"/></svg><div class="corner" style="left:28px;top:524.0px"></div><svg width="26" height="24" viewBox="0 0 26 24" style="left:6px;top:531.0px"><circle cx="11" cy="10" r="5.500" fill="#8a8a8a" stroke="#cfcfcf" stroke-width="1.800"/><path d="M15 14 l6 6" stroke="#cfcfcf" stroke-width="3"/></svg><svg width="32" height="12" viewBox="0 0 32 12" style="left:3px;top:558px"><rect x="4.500" y="4.500" width="6" height="6" fill="#fff" stroke="#ddd"/><rect x="0.500" y="0.500" width="6" height="6" fill="#222" stroke="#ddd"/><path d="M20 2 q6 0 6 6 M20 2 l2.500 -2 M20 2 l2.500 2 M26 8 l-2 -2.500 M26 8 l2 -2.500" stroke="#ddd" stroke-width="1.300" fill="none"/></svg><div class="abs" style="left:13px;top:585px;width:19px;height:19px;background:#000;border:1px solid #e8e8e8;box-shadow:0 0 0 1px #222"></div><div class="abs" style="left:3px;top:575px;width:19px;height:19px;background:#fbb917;border:1px solid #e8e8e8;box-shadow:0 0 0 1px #333"></div><svg width="18" height="14" viewBox="0 0 18 14" style="left:9px;top:612px"><rect x="0.500" y="0.500" width="16" height="12" fill="#3c3c3c" stroke="#d0d0d0"/><circle cx="8.500" cy="6.500" r="3.600" fill="none" stroke="#e8e8e8" stroke-width="1" stroke-dasharray="1 1"/></svg><svg width="20" height="16" viewBox="0 0 20 16" style="left:8px;top:637px"><rect x="0.500" y="4.500" width="11" height="9" fill="#6a6a6a" stroke="#d0d0d0"/><rect x="5.500" y="0.500" width="11" height="9" fill="#8a8a8a" stroke="#d0d0d0"/></svg><div class="corner" style="left:28px;top:649px"></div></div>
<div id="dock"><div class="abs" style="left:0;top:0;width:17px;height:755px;background:linear-gradient(90deg,#3a3a3a,#484848)"></div><div class="abs" style="left:0;top:0;width:17px;height:20px;background:#3a3a3a"></div><div class="abs" style="left:16px;top:0;width:3px;height:755px;background:#2c2c2c;border-left:1px solid #3c3c3c"></div><div class="abs" style="left:19px;top:0;width:38px;height:755px;background:#535353"></div><div class="abs" style="left:56px;top:0;width:3px;height:755px;background:#2c2c2c;border-left:1px solid #3c3c3c"></div><div class="abs" style="left:19px;top:0;width:155px;height:11px;background:#353535"></div><div class="abs" style="left:19px;top:11px;width:155px;height:1px;background:#2a2a2a"></div><svg width="9" height="7" viewBox="0 0 9 7" style="left:43px;top:2px"><path d="M4 0 v7 l-4 -3.5z M8.5 0 v7 l-4 -3.5z" fill="#dcdcdc"/></svg><div class="abs" style="left:19px;top:12px;width:38px;height:40px;border-bottom:1px solid #2c2c2c;box-shadow:inset 0 1px 0 #646464"></div><div class="grip" style="left:28px;top:16px;width:20px"></div><svg width="16" height="19" viewBox="0 0 16 19" style="left:31px;top:27px"><rect x="0.500" y="0.500" width="4" height="4" fill="none" stroke="#d0d0d0"/><rect x="0.500" y="6.500" width="4" height="4" fill="none" stroke="#d0d0d0"/><rect x="0" y="12.500" width="5" height="5" fill="#c0c0c0"/><path d="M9 14 q6 -3 4 -12 M13 2 l-4.500 1 l3 3z" fill="none" stroke="#d0d0d0" stroke-width="1.600"/></svg><div class="abs" style="left:19px;top:53px;width:38px;height:40px;box-shadow:inset 0 1px 0 #646464"></div><div class="grip" style="left:28px;top:57px;width:20px"></div><svg width="18" height="17" viewBox="0 0 18 17" style="left:29px;top:67px"><path d="M5 12 q-5 -5 -3 -10 q3 3 5 10z M9 12 q-1.500 -7 0 -11 q2 4 1.500 11z M12 12 q1 -6 5 -8 q1 4 -3 8z" fill="#c4c4c4"/><rect x="5" y="12" width="8" height="5" fill="#c4c4c4"/></svg><div class="abs" style="left:59px;top:12px;width:115px;height:17px;background:#3a3a3a;border-bottom:1px solid #2c2c2c"></div><div class="abs" style="left:59px;top:12px;width:47px;height:18px;background:#535353;border-top:1px solid #686868;border-right:1px solid #2c2c2c;font-size:12px;line-height:18px;text-align:center;color:#efefef;padding-left:2px">直方图</div><div class="abs" style="left:59px;top:30px;width:115px;height:1px;background:#5e5e5e"></div><div class="abs" style="left:59px;top:32px;width:115px;height:1px;background:#333"></div><div class="abs" style="left:59px;top:33px;width:115px;height:17px;background:#3a3a3a"></div><div class="dtab" style="left:59px;top:33px;width:38px">图层</div><div class="dtab" style="left:97px;top:33px;width:38px">通道</div><div class="dtab" style="left:135px;top:33px;width:38px;background:#535353;color:#f4f4f4;border-top:1px solid #686868;height:19px;line-height:18px">路径</div><div class="abs" style="left:59px;top:50px;width:76px;height:1px;background:#5e5e5e"></div></div><div class="abs" id="secview" style="left:61px;top:103px;width:256px;height:322px;background:#646464;box-shadow:0 0 0 1px #000"><div class="abs" style="left:4px;top:5px;width:3px;height:10px;background:repeating-linear-gradient(180deg,#e0e0e0 0 1px,transparent 1px 2px)"></div><svg width="8" height="8" viewBox="0 0 8 8" style="left:15px;top:6px"><path d="M1 1 L6.500 6.500 M6.500 1 L1 6.500" stroke="#f0f0f0" stroke-width="1.500"/></svg><svg width="12" height="12" viewBox="0 0 12 12" style="left:34px;top:4px"><rect x="0.500" y="0.500" width="10.500" height="10.500" fill="#4a4a4a" stroke="#d8d8d8"/><path d="M4.500 1.500 h2.500 v3.500 h2.500 l-3.800 3.800 l-3.800 -3.800 h2.600z" fill="#e4e4e4"/></svg><div class="abs" style="left:51px;top:8px;border:3px solid transparent;border-top:4px solid #8c8c8c;border-bottom:none"></div><svg width="12" height="12" viewBox="0 0 12 12" style="left:241px;top:4px"><rect x="0.500" y="0.500" width="9" height="9" fill="#d8d8d8" stroke="#eee"/><path d="M2 2 l5 5 M7 3.500 v3.500 h-3.500" stroke="#333" stroke-width="1.300" fill="none"/><rect x="7" y="7" width="4.500" height="4.500" fill="#eee"/><path d="M8 8 l2.500 2.500 M8 10.500 v-2.500 h2.500" stroke="#222" stroke-width="0.900" fill="none"/></svg><svg width="256" height="296" viewBox="0 0 256 296" style="left:0;top:0"><rect x="3.4" y="19.6" width="250" height="276.4" fill="#d0d0d0"/><clipPath id="gc"><rect x="3.4" y="19.6" width="250" height="276.4"/></clipPath><g clip-path="url(#gc)"><line x1="-3.80" x2="-3.80" y1="19.6" y2="296.0" stroke="#222" stroke-opacity="0.75" stroke-width="0.9"/><line x1="9.37" x2="9.37" y1="19.6" y2="296.0" stroke="#222" stroke-opacity="0.75" stroke-width="0.9"/><line x1="22.54" x2="22.54" y1="19.6" y2="296.0" stroke="#222" stroke-opacity="0.75" stroke-width="0.9"/><line x1="35.71" x2="35.71" y1="19.6" y2="296.0" stroke="#222" stroke-opacity="0.75" stroke-width="0.9"/><line x1="48.88" x2="48.88" y1="19.6" y2="296.0" stroke="#222" stroke-opacity="0.75" stroke-width="0.9"/><line x1="62.05" x2="62.05" y1="19.6" y2="296.0" stroke="#222" stroke-opacity="0.75" stroke-width="0.9"/><line x1="75.22" x2="75.22" y1="19.6" y2="296.0" stroke="#222" stroke-opacity="0.75" stroke-width="0.9"/><line x1="88.39" x2="88.39" y1="19.6" y2="296.0" stroke="#222" stroke-opacity="0.75" stroke-width="0.9"/><line x1="101.56" x2="101.56" y1="19.6" y2="296.0" stroke="#222" stroke-opacity="0.75" stroke-width="0.9"/><line x1="114.73" x2="114.73" y1="19.6" y2="296.0" stroke="#222" stroke-opacity="0.75" stroke-width="0.9"/><line x1="141.07" x2="141.07" y1="19.6" y2="296.0" stroke="#222" stroke-opacity="0.75" stroke-width="0.9"/><line x1="154.24" x2="154.24" y1="19.6" y2="296.0" stroke="#222" stroke-opacity="0.75" stroke-width="0.9"/><line x1="167.41" x2="167.41" y1="19.6" y2="296.0" stroke="#222" stroke-opacity="0.75" stroke-width="0.9"/><line x1="180.58" x2="180.58" y1="19.6" y2="296.0" stroke="#222" stroke-opacity="0.75" stroke-width="0.9"/><line x1="193.75" x2="193.75" y1="19.6" y2="296.0" stroke="#222" stroke-opacity="0.75" stroke-width="0.9"/><line x1="206.92" x2="206.92" y1="19.6" y2="296.0" stroke="#222" stroke-opacity="0.75" stroke-width="0.9"/><line x1="220.09" x2="220.09" y1="19.6" y2="296.0" stroke="#222" stroke-opacity="0.75" stroke-width="0.9"/><line x1="233.26" x2="233.26" y1="19.6" y2="296.0" stroke="#222" stroke-opacity="0.75" stroke-width="0.9"/><line x1="246.43" x2="246.43" y1="19.6" y2="296.0" stroke="#222" stroke-opacity="0.75" stroke-width="0.9"/><line x1="259.60" x2="259.60" y1="19.6" y2="296.0" stroke="#222" stroke-opacity="0.75" stroke-width="0.9"/><line y1="15.93" y2="15.93" x1="3.4" x2="253.4" stroke="#111" stroke-opacity="0.8" stroke-width="1"/><line y1="29.10" y2="29.10" x1="3.4" x2="253.4" stroke="#111" stroke-opacity="0.8" stroke-width="1"/><line y1="42.27" y2="42.27" x1="3.4" x2="253.4" stroke="#111" stroke-opacity="0.8" stroke-width="1"/><line y1="55.44" y2="55.44" x1="3.4" x2="253.4" stroke="#111" stroke-opacity="0.8" stroke-width="1"/><line y1="68.61" y2="68.61" x1="3.4" x2="253.4" stroke="#111" stroke-opacity="0.8" stroke-width="1"/><line y1="81.78" y2="81.78" x1="3.4" x2="253.4" stroke="#111" stroke-opacity="0.8" stroke-width="1"/><line y1="94.95" y2="94.95" x1="3.4" x2="253.4" stroke="#111" stroke-opacity="0.8" stroke-width="1"/><line y1="108.12" y2="108.12" x1="3.4" x2="253.4" stroke="#111" stroke-opacity="0.8" stroke-width="1"/><line y1="121.29" y2="121.29" x1="3.4" x2="253.4" stroke="#111" stroke-opacity="0.8" stroke-width="1"/><line y1="134.46" y2="134.46" x1="3.4" x2="253.4" stroke="#111" stroke-opacity="0.8" stroke-width="1"/><line y1="147.63" y2="147.63" x1="3.4" x2="253.4" stroke="#111" stroke-opacity="0.8" stroke-width="1"/><line y1="173.97" y2="173.97" x1="3.4" x2="253.4" stroke="#111" stroke-opacity="0.8" stroke-width="1"/><line y1="187.14" y2="187.14" x1="3.4" x2="253.4" stroke="#111" stroke-opacity="0.8" stroke-width="1"/><line y1="200.31" y2="200.31" x1="3.4" x2="253.4" stroke="#111" stroke-opacity="0.8" stroke-width="1"/><line y1="213.48" y2="213.48" x1="3.4" x2="253.4" stroke="#111" stroke-opacity="0.8" stroke-width="1"/><line y1="226.65" y2="226.65" x1="3.4" x2="253.4" stroke="#111" stroke-opacity="0.8" stroke-width="1"/><line y1="239.82" y2="239.82" x1="3.4" x2="253.4" stroke="#111" stroke-opacity="0.8" stroke-width="1"/><line y1="252.99" y2="252.99" x1="3.4" x2="253.4" stroke="#111" stroke-opacity="0.8" stroke-width="1"/><line y1="266.16" y2="266.16" x1="3.4" x2="253.4" stroke="#111" stroke-opacity="0.8" stroke-width="1"/><line y1="279.33" y2="279.33" x1="3.4" x2="253.4" stroke="#111" stroke-opacity="0.8" stroke-width="1"/><line y1="292.50" y2="292.50" x1="3.4" x2="253.4" stroke="#111" stroke-opacity="0.8" stroke-width="1"/><line x1="6.17" x2="6.17" y1="19.6" y2="296.0" stroke="#555" stroke-opacity="0.5" stroke-width="1"/><rect x="126.80" y="19.6" width="2.200" height="276.4" fill="#1a1ae6"/><rect x="3.4" y="159.50" width="250" height="2.600" fill="#ff0606"/><defs><linearGradient id="bo" x1="0" y1="0" x2="0.300" y2="1"><stop offset="0" stop-color="#a4610d"/><stop offset="1" stop-color="#ba7720"/></linearGradient><linearGradient id="bl2" x1="0" y1="0" x2="1" y2="0"><stop offset="0" stop-color="#8a5008"/><stop offset="1" stop-color="#6f3f02"/></linearGradient></defs><rect x="75.3" y="114.6" width="105.4" height="92.8" fill="url(#bo)"/><rect x="75.3" y="114.6" width="11.500" height="92.8" fill="url(#bl2)"/><rect x="86.6" y="114.6" width="2.600" height="92.8" fill="#221100"/><rect x="102.6" y="114.6" width="7.400" height="92.8" fill="#361e00"/><rect x="133.6" y="114.6" width="1.500" height="92.8" fill="#1a0c00"/></g></svg></div><div class="panel" id="props" style="left:64px;top:399px;width:250px;height:375px;border-radius:3px 3px 0 0"><div class="ptop"></div><svg width="9" height="7" viewBox="0 0 9 7" style="left:221px;top:3px"><path d="M4 0 v7 l-4 -3.5z M8.5 0 v7 l-4 -3.5z" fill="#dcdcdc"/></svg><svg width="8" height="8" viewBox="0 0 8 8" style="left:238px;top:2.5px"><path d="M1 1 L7 7 M7 1 L1 7" stroke="#e8e8e8" stroke-width="1.7"/></svg><div class="ptabs"><div class="ptab" style="width:38px">属性</div></div><svg width="16" height="9" viewBox="0 0 16 9" style="left:231px;top:17px"><path d="M0 3 h5 l-2.500 3z" fill="#d8d8d8"/><path d="M6.500 1 h8 M6.500 3.300 h8 M6.500 5.600 h8 M6.500 7.900 h8" stroke="#d8d8d8" stroke-width="1"/></svg><div class="abs" style="left:11px;top:35px;width:23px;height:23px;background:#393939;border:1px solid #444;border-radius:3px"></div><svg width="16" height="11" viewBox="0 0 16 11" style="left:15px;top:41px"><rect x="0" y="1" width="10.500" height="9" rx="2" fill="#c9c9c9"/><path d="M10 5.500 l4.500 -3.500 v7z" fill="#c9c9c9"/></svg><svg width="15" height="14" viewBox="0 0 15 14" style="left:39px;top:39px"><path d="M7.500 3.500 l4 2 v4.500 l-4 2 l-4 -2 v-4.500z M3.500 5.500 l4 2 l4 -2 M7.500 7.500 v4.500" fill="none" stroke="#d0d0d0" stroke-width="1"/><path d="M7.500 0.500 v3 M0.500 12.500 l3 -2 M14.500 12.500 l-3 -2" stroke="#d0d0d0" stroke-width="1"/><circle cx="7.500" cy="1" r="1" fill="#d0d0d0"/></svg><div class="pl" style="left:64px;top:40px">3D 相机</div><div class="hsep" style="left:0;top:62px;width:250px"></div><div class="abs" style="left:235px;top:64px;width:15px;height:284px;background:linear-gradient(90deg,#3f3f3f,#4a4a4a 60%,#474747)"></div><div class="pl" style="left:5px;top:70px">视图：</div><div class="sel" style="left:48px;top:68px;width:181px;height:20px"><span class="lab">默认相机</span><span class="ud"></span></div><div class="hsep" style="left:0;top:92px;width:235px"></div><div class="abs" style="left:60px;top:99px;width:22px;height:22px;background:#393939;border:1px solid #444;border-radius:3px"></div><svg width="16" height="16" viewBox="0 0 16 16" style="left:63px;top:102px"><path d="M8 1 l6.500 3 v7.500 l-6.500 3.500 l-6.500 -3.500 v-7.500z" fill="#8a8a8a" stroke="#c4c4c4" stroke-width="1"/><path d="M1.500 4 l6.500 3 l6.500 -3 M8 7 v8" fill="none" stroke="#c4c4c4" stroke-width="1"/><path d="M8 1 l6.500 3 l-6.500 3 l-6.500 -3z" fill="#a6a6a6"/></svg><div class="pl" style="left:88px;top:103px">透视</div><svg width="16" height="16" viewBox="0 0 16 16" style="left:123px;top:102px"><path d="M8 1 l6.500 3 v7.500 l-6.500 3.500 l-6.500 -3.500 v-7.500z" fill="#8a8a8a" stroke="#c4c4c4" stroke-width="1"/><path d="M1.500 4 l6.500 3 l6.500 -3 M8 7 v8" fill="none" stroke="#c4c4c4" stroke-width="1"/><path d="M8 1 l6.500 3 l-6.500 3 l-6.500 -3z" fill="#a6a6a6"/></svg><div class="pl" style="left:148px;top:103px">正交</div><div class="pl" style="left:5px;top:131px">视角：</div><div class="num" style="left:41px;top:127px;width:55px"><span>67</span><i></i></div><div class="sel" style="left:106px;top:127px;width:123px;height:20px"><span class="lab" style="left:9px">毫米镜头</span><span class="ud"></span></div><div class="hsep" style="left:0;top:152px;width:235px"></div><div class="pl" style="left:5px;top:159px">景深</div><div class="pl" style="left:5px;top:183px">距离：</div><div class="num" style="left:39px;top:179px;width:55px"><span>0.5</span><i></i></div><div class="pl" style="left:143px;top:183px">深度：</div><div class="num" style="left:175px;top:179px;width:54px"><span>0</span><i></i></div><div class="hsep" style="left:0;top:203px;width:235px"></div><div class="chk" style="left:5px;top:210px;width:14px;height:14px;background:linear-gradient(#707070,#5e5e5e)"></div><div class="pl" style="left:25px;top:211px">立体</div><div class="pl dis" style="left:5px;top:233px">立体视图：</div><div class="sel disabled" style="left:66px;top:230px;width:69px;height:20px;border-color:#3e3e3e;background:linear-gradient(#626262,#585858)"><span class="ud"></span></div><div class="pfoot" style="top:348px"></div><svg width="14" height="13" viewBox="0 0 14 13" style="left:179px;top:352px"><rect x="0.750" y="1.250" width="12.500" height="11" fill="#474747" stroke="#e0e0e0" stroke-width="1.500"/><path d="M7 3.500 l3 1.700 v3.300 l-3 1.700 l-3 -1.700 v-3.300z" fill="#d8d8d8"/><path d="M4 5.200 l3 1.700 l3 -1.700 M7 6.900 v3.300" stroke="#474747" stroke-width="0.900" fill="none"/></svg><svg width="12" height="14" viewBox="0 0 12 14" style="left:209px;top:352px"><path d="M0.500 3.500 h11 M4 3 v-1.500 h4 v1.500 M1.500 4.500 l0.700 8.500 h7.600 l0.700 -8.500" fill="none" stroke="#8a8a8a" stroke-width="1.200"/><path d="M4 5.500 v6 M6 5.500 v6 M8 5.500 v6" stroke="#8a8a8a" stroke-width="1"/></svg><svg width="10" height="10" viewBox="0 0 10 10" style="left:238px;top:357px" shape-rendering="crispEdges"><rect x="8" y="0" width="1" height="1" fill="#8a8a8a"/><rect x="6" y="2" width="1" height="1" fill="#8a8a8a"/><rect x="8" y="2" width="1" height="1" fill="#8a8a8a"/><rect x="4" y="4" width="1" height="1" fill="#8a8a8a"/><rect x="6" y="4" width="1" height="1" fill="#8a8a8a"/><rect x="8" y="4" width="1" height="1" fill="#8a8a8a"/><rect x="2" y="6" width="1" height="1" fill="#8a8a8a"/><rect x="4" y="6" width="1" height="1" fill="#8a8a8a"/><rect x="6" y="6" width="1" height="1" fill="#8a8a8a"/><rect x="8" y="6" width="1" height="1" fill="#8a8a8a"/><rect x="0" y="8" width="1" height="1" fill="#8a8a8a"/><rect x="2" y="8" width="1" height="1" fill="#8a8a8a"/><rect x="4" y="8" width="1" height="1" fill="#8a8a8a"/><rect x="6" y="8" width="1" height="1" fill="#8a8a8a"/><rect x="8" y="8" width="1" height="1" fill="#8a8a8a"/></svg><div class="pgrip" style="top:367px"></div><div class="grip" style="left:115px;top:370px;width:20px"></div></div><div class="panel" id="p3d" style="left:940px;top:146px;width:210px;height:450px;border-radius:3px 3px 0 0;background:#484848"><div class="ptop"></div><svg width="9" height="7" viewBox="0 0 9 7" style="left:182px;top:3px"><path d="M4 0 v7 l-4 -3.5z M8.5 0 v7 l-4 -3.5z" fill="#dcdcdc"/></svg><svg width="8" height="8" viewBox="0 0 8 8" style="left:199px;top:2.5px"><path d="M1 1 L7 7 M7 1 L1 7" stroke="#e8e8e8" stroke-width="1.7"/></svg><div class="ptabs"><div class="ptab" style="width:28px;font-family:'Liberation Sans',sans-serif">3D</div></div><svg width="16" height="9" viewBox="0 0 16 9" style="left:192px;top:17px"><path d="M0 3 h5 l-2.500 3z" fill="#d8d8d8"/><path d="M6.500 1 h8 M6.500 3.300 h8 M6.500 5.600 h8 M6.500 7.900 h8" stroke="#d8d8d8" stroke-width="1"/></svg><div class="abs" style="left:0;top:30px;width:210px;height:35px;background:#535353;border-bottom:1px solid #3a3a3a"></div><div class="abs" style="left:58px;top:38px;width:22px;height:22px;background:#393939;border:1px solid #444;border-radius:3px"></div><svg width="13" height="12" viewBox="0 0 13 12" style="left:62px;top:43px"><path d="M0.500 0.500 h4 M1.500 0.500 v9 h3 M1.500 5 h3" fill="none" stroke="#d4d4d4" stroke-width="1"/><path d="M5 2.500 h7.500 M5 5.500 h7.500 M5 9.500 h7.500" stroke="#d4d4d4" stroke-width="1"/><rect x="6" y="1.500" width="3" height="2" fill="#535353" stroke="#d4d4d4" stroke-width="0.800"/><rect x="8" y="4.500" width="3" height="2" fill="#535353" stroke="#d4d4d4" stroke-width="0.800"/><rect x="7" y="8.500" width="3" height="2" fill="#535353" stroke="#d4d4d4" stroke-width="0.800"/></svg><svg width="11" height="13" viewBox="0 0 11 13" style="left:87px;top:42px"><rect x="0.500" y="0.500" width="9.500" height="12" rx="1.500" fill="#9a9a9a" stroke="#c8c8c8"/><path d="M2 4.500 h7 M2 6.500 h7 M2 8.500 h7 M2 10.500 h7 M4 3 v9 M6.500 3 v9" stroke="#666" stroke-width="0.700"/></svg><svg width="12" height="12" viewBox="0 0 12 12" style="left:111px;top:43px"><defs><pattern id="chk" width="2" height="2" patternUnits="userSpaceOnUse"><rect width="2" height="2" fill="#5a5a5a"/><rect width="1" height="1" fill="#e8e8e8"/><rect x="1" y="1" width="1" height="1" fill="#e8e8e8"/></pattern></defs><path d="M1 2 q0 -1 1 -0.500 l1.500 1 h4 l1.500 -1 q1 -0.500 1 0.500 v6 q-1 3.500 -5 3.500 q-4 0 -4 -3.500z" fill="url(#chk)" stroke="#c0c0c0" stroke-width="0.600"/><path d="M9 4 q2.500 1 2 4 q-1 1.500 -2.500 2z" fill="#cfcfcf"/></svg><svg width="10" height="14" viewBox="0 0 10 14" style="left:135px;top:41px"><path d="M5 0.500 a4.300 4.300 0 0 1 4.300 4.300 q0 2 -2 4 v1.500 h-4.600 v-1.500 q-2 -2 -2 -4 a4.300 4.300 0 0 1 4.300 -4.300z" fill="#c4c4c4"/><rect x="3" y="11" width="4" height="1" fill="#c4c4c4"/><rect x="3.500" y="12.500" width="3" height="1" fill="#c4c4c4"/></svg><div class="abs" style="left:195px;top:64px;width:15px;height:357px;background:linear-gradient(90deg,#3f3f3f,#4a4a4a 60%,#474747)"></div><div class="row" style="top:65px;background:#535353"><div class="eyec"></div><svg width="14" height="9" viewBox="0 0 14 9" style="left:4px;top:5px"><path d="M0.300 4.500 q6.700 -8 13.400 0 q-6.700 7 -13.400 0z" fill="#7d7d7d"/><circle cx="7" cy="4.300" r="2.700" fill="#535353"/><circle cx="7" cy="4.300" r="1.500" fill="#8c8c8c"/></svg><svg width="14" height="13" viewBox="0 0 14 13" style="left:23px;top:3px"><circle cx="7" cy="5" r="2" fill="#d4d4d4"/><line x1="3.80" y1="5.00" x2="2.00" y2="5.00" stroke="#d4d4d4" stroke-width="1"/><line x1="4.23" y1="3.40" x2="2.67" y2="2.50" stroke="#d4d4d4" stroke-width="1"/><line x1="5.40" y1="2.23" x2="4.50" y2="0.67" stroke="#d4d4d4" stroke-width="1"/><line x1="7.00" y1="1.80" x2="7.00" y2="0.00" stroke="#d4d4d4" stroke-width="1"/><line x1="8.60" y1="2.23" x2="9.50" y2="0.67" stroke="#d4d4d4" stroke-width="1"/><line x1="9.77" y1="3.40" x2="11.33" y2="2.50" stroke="#d4d4d4" stroke-width="1"/><line x1="10.20" y1="5.00" x2="12.00" y2="5.00" stroke="#d4d4d4" stroke-width="1"/><path d="M0.500 9 l6.500 -2.500 l6.500 2.500 l-6.500 3z" fill="none" stroke="#d4d4d4" stroke-width="1.100"/><path d="M4 9.500 l3 1.500 l3 -1.500 l-3 -1z" fill="#d4d4d4"/></svg><div class="nm" style="left:46px">环境</div></div><div class="row" style="top:85px;background:#535353"><div class="eyec"></div><svg width="14" height="9" viewBox="0 0 14 9" style="left:4px;top:5px"><path d="M0.300 4.500 q6.700 -8 13.400 0 q-6.700 7 -13.400 0z" fill="#7d7d7d"/><circle cx="7" cy="4.300" r="2.700" fill="#535353"/><circle cx="7" cy="4.300" r="1.500" fill="#8c8c8c"/></svg><svg width="13" height="12" viewBox="0 0 13 12" style="left:24px;top:4px"><path d="M0.500 0.500 h4 M1.500 0.500 v9 h3 M1.500 5 h3" fill="none" stroke="#d4d4d4" stroke-width="1"/><path d="M5 2.500 h7.500 M5 5.500 h7.500 M5 9.500 h7.500" stroke="#d4d4d4" stroke-width="1"/><rect x="6" y="1.500" width="3" height="2" fill="#535353" stroke="#d4d4d4" stroke-width="0.800"/><rect x="8" y="4.500" width="3" height="2" fill="#535353" stroke="#d4d4d4" stroke-width="0.800"/><rect x="7" y="8.500" width="3" height="2" fill="#535353" stroke="#d4d4d4" stroke-width="0.800"/></svg><div class="nm" style="left:46px">场景</div></div><div class="row" style="top:105px;background:#535353"><div class="eyec"></div><svg width="14" height="9" viewBox="0 0 14 9" style="left:4px;top:5px"><path d="M0.300 4.500 q6.700 -8 13.400 0 q-6.700 7 -13.400 0z" fill="#7d7d7d"/><circle cx="7" cy="4.300" r="2.700" fill="#535353"/><circle cx="7" cy="4.300" r="1.500" fill="#8c8c8c"/></svg><div class="abs" style="left:54px;top:1px;width:141px;height:18px;background:#56657d"></div><svg width="16" height="11" viewBox="0 0 16 11" style="left:40px;top:5px"><rect x="0" y="1" width="10.500" height="9" rx="2" fill="#c9c9c9"/><path d="M10 5.500 l4.500 -3.500 v7z" fill="#c9c9c9"/></svg><div class="nm" style="left:62px">当前视图</div></div><div class="row" style="top:125px;background:#535353"><div class="eyec"></div><svg width="14" height="9" viewBox="0 0 14 9" style="left:4px;top:5px"><path d="M0.300 4.500 q6.700 -8 13.400 0 q-6.700 7 -13.400 0z" fill="#e4e4e4"/><circle cx="7" cy="4.300" r="2.700" fill="#535353"/><circle cx="7" cy="4.300" r="1.500" fill="#f0f0f0"/></svg><svg width="11" height="13" viewBox="0 0 11 13" style="left:42px;top:4px"><path d="M1 4 l5 -3 l4 2 l-3 2.500 v7 h-3 v-6z" fill="#8f8f8f"/><path d="M1 4 l5 -3 l4 2 l-3 2.500z" fill="#c8c8c8"/><path d="M7 5.500 l3 -2.500 v2.500 l-1.500 1 v5.500 l-1.500 0.500z" fill="#6c6c6c"/></svg><div class="abs" style="left:27px;top:7px;border:4.500px solid transparent;border-top:6px solid #f0f0f0;border-bottom:none"></div><div class="nm" style="left:62px">好</div></div><div class="row" style="top:145px;background:#535353"><div class="eyec"></div><svg width="14" height="9" viewBox="0 0 14 9" style="left:4px;top:5px"><path d="M0.300 4.500 q6.700 -8 13.400 0 q-6.700 7 -13.400 0z" fill="#7d7d7d"/><circle cx="7" cy="4.300" r="2.700" fill="#535353"/><circle cx="7" cy="4.300" r="1.500" fill="#8c8c8c"/></svg><svg width="12" height="12" viewBox="0 0 12 12" style="left:58px;top:5px"><defs><pattern id="chk" width="2" height="2" patternUnits="userSpaceOnUse"><rect width="2" height="2" fill="#5a5a5a"/><rect width="1" height="1" fill="#e8e8e8"/><rect x="1" y="1" width="1" height="1" fill="#e8e8e8"/></pattern></defs><path d="M1 2 q0 -1 1 -0.500 l1.500 1 h4 l1.500 -1 q1 -0.500 1 0.500 v6 q-1 3.500 -5 3.500 q-4 0 -4 -3.500z" fill="url(#chk)" stroke="#c0c0c0" stroke-width="0.600"/><path d="M9 4 q2.500 1 2 4 q-1 1.500 -2.500 2z" fill="#cfcfcf"/></svg><div class="nm" style="left:78px">好 前膨胀材质</div></div><div class="row" style="top:165px;background:#535353"><div class="eyec"></div><svg width="14" height="9" viewBox="0 0 14 9" style="left:4px;top:5px"><path d="M0.300 4.500 q6.700 -8 13.400 0 q-6.700 7 -13.400 0z" fill="#7d7d7d"/><circle cx="7" cy="4.300" r="2.700" fill="#535353"/><circle cx="7" cy="4.300" r="1.500" fill="#8c8c8c"/></svg><svg width="12" height="12" viewBox="0 0 12 12" style="left:58px;top:5px"><defs><pattern id="chk" width="2" height="2" patternUnits="userSpaceOnUse"><rect width="2" height="2" fill="#5a5a5a"/><rect width="1" height="1" fill="#e8e8e8"/><rect x="1" y="1" width="1" height="1" fill="#e8e8e8"/></pattern></defs><path d="M1 2 q0 -1 1 -0.500 l1.500 1 h4 l1.500 -1 q1 -0.500 1 0.500 v6 q-1 3.500 -5 3.500 q-4 0 -4 -3.500z" fill="url(#chk)" stroke="#c0c0c0" stroke-width="0.600"/><path d="M9 4 q2.500 1 2 4 q-1 1.500 -2.500 2z" fill="#cfcfcf"/></svg><div class="nm" style="left:78px">好 前斜面材质</div></div><div class="row" style="top:185px;background:#535353"><div class="eyec"></div><svg width="14" height="9" viewBox="0 0 14 9" style="left:4px;top:5px"><path d="M0.300 4.500 q6.700 -8 13.400 0 q-6.700 7 -13.400 0z" fill="#7d7d7d"/><circle cx="7" cy="4.300" r="2.700" fill="#535353"/><circle cx="7" cy="4.300" r="1.500" fill="#8c8c8c"/></svg><svg width="12" height="12" viewBox="0 0 12 12" style="left:58px;top:5px"><defs><pattern id="chk" width="2" height="2" patternUnits="userSpaceOnUse"><rect width="2" height="2" fill="#5a5a5a"/><rect width="1" height="1" fill="#e8e8e8"/><rect x="1" y="1" width="1" height="1" fill="#e8e8e8"/></pattern></defs><path d="M1 2 q0 -1 1 -0.500 l1.500 1 h4 l1.500 -1 q1 -0.500 1 0.500 v6 q-1 3.500 -5 3.500 q-4 0 -4 -3.500z" fill="url(#chk)" stroke="#c0c0c0" stroke-width="0.600"/><path d="M9 4 q2.500 1 2 4 q-1 1.500 -2.500 2z" fill="#cfcfcf"/></svg><div class="nm" style="left:78px">好 凸出材质</div></div><div class="row" style="top:205px;background:#535353"><div class="eyec"></div><svg width="14" height="9" viewBox="0 0 14 9" style="left:4px;top:5px"><path d="M0.300 4.500 q6.700 -8 13.400 0 q-6.700 7 -13.400 0z" fill="#7d7d7d"/><circle cx="7" cy="4.300" r="2.700" fill="#535353"/><circle cx="7" cy="4.300" r="1.500" fill="#8c8c8c"/></svg><svg width="12" height="12" viewBox="0 0 12 12" style="left:58px;top:5px"><defs><pattern id="chk" width="2" height="2" patternUnits="userSpaceOnUse"><rect width="2" height="2" fill="#5a5a5a"/><rect width="1" height="1" fill="#e8e8e8"/><rect x="1" y="1" width="1" height="1" fill="#e8e8e8"/></pattern></defs><path d="M1 2 q0 -1 1 -0.500 l1.500 1 h4 l1.500 -1 q1 -0.500 1 0.500 v6 q-1 3.500 -5 3.500 q-4 0 -4 -3.500z" fill="url(#chk)" stroke="#c0c0c0" stroke-width="0.600"/><path d="M9 4 q2.500 1 2 4 q-1 1.500 -2.500 2z" fill="#cfcfcf"/></svg><div class="nm" style="left:78px">好 后斜面材质</div></div><div class="row" style="top:225px;background:#535353"><div class="eyec"></div><svg width="14" height="9" viewBox="0 0 14 9" style="left:4px;top:5px"><path d="M0.300 4.500 q6.700 -8 13.400 0 q-6.700 7 -13.400 0z" fill="#7d7d7d"/><circle cx="7" cy="4.300" r="2.700" fill="#535353"/><circle cx="7" cy="4.300" r="1.500" fill="#8c8c8c"/></svg><svg width="12" height="12" viewBox="0 0 12 12" style="left:58px;top:5px"><defs><pattern id="chk" width="2" height="2" patternUnits="userSpaceOnUse"><rect width="2" height="2" fill="#5a5a5a"/><rect width="1" height="1" fill="#e8e8e8"/><rect x="1" y="1" width="1" height="1" fill="#e8e8e8"/></pattern></defs><path d="M1 2 q0 -1 1 -0.500 l1.500 1 h4 l1.500 -1 q1 -0.500 1 0.500 v6 q-1 3.500 -5 3.500 q-4 0 -4 -3.500z" fill="url(#chk)" stroke="#c0c0c0" stroke-width="0.600"/><path d="M9 4 q2.500 1 2 4 q-1 1.500 -2.500 2z" fill="#cfcfcf"/></svg><div class="nm" style="left:78px">好 后膨胀材质</div></div><div class="row" style="top:245px;background:#535353"><div class="eyec"></div><svg width="14" height="9" viewBox="0 0 14 9" style="left:4px;top:5px"><path d="M0.300 4.500 q6.700 -8 13.400 0 q-6.700 7 -13.400 0z" fill="#7d7d7d"/><circle cx="7" cy="4.300" r="2.700" fill="#535353"/><circle cx="7" cy="4.300" r="1.500" fill="#8c8c8c"/></svg><svg width="12" height="12" viewBox="0 0 12 12" style="left:56px;top:4px"><circle cx="6" cy="6" r="5" fill="none" stroke="#e0e0e0" stroke-width="1.100"/><circle cx="6" cy="6" r="2.500" fill="none" stroke="#e0e0e0" stroke-width="1.100"/></svg><div class="nm" style="left:78px">边界约束 1</div></div><div class="row" style="top:265px;background:#535353"><div class="eyec"></div><svg width="14" height="9" viewBox="0 0 14 9" style="left:4px;top:5px"><path d="M0.300 4.500 q6.700 -8 13.400 0 q-6.700 7 -13.400 0z" fill="#7d7d7d"/><circle cx="7" cy="4.300" r="2.700" fill="#535353"/><circle cx="7" cy="4.300" r="1.500" fill="#8c8c8c"/></svg><svg width="12" height="12" viewBox="0 0 12 12" style="left:56px;top:4px"><circle cx="6" cy="6" r="5" fill="none" stroke="#e0e0e0" stroke-width="1.100"/><circle cx="6" cy="6" r="2.500" fill="none" stroke="#e0e0e0" stroke-width="1.100"/></svg><div class="abs" style="left:43px;top:7px;border:4.500px solid transparent;border-top:6px solid #f0f0f0;border-bottom:none"></div><div class="nm" style="left:78px">边界约束 2</div></div><div class="row" style="top:285px;background:#535353"><div class="eyec"></div><svg width="14" height="9" viewBox="0 0 14 9" style="left:4px;top:5px"><path d="M0.300 4.500 q6.700 -8 13.400 0 q-6.700 7 -13.400 0z" fill="#7d7d7d"/><circle cx="7" cy="4.300" r="2.700" fill="#535353"/><circle cx="7" cy="4.300" r="1.500" fill="#8c8c8c"/></svg><svg width="12" height="12" viewBox="0 0 12 12" style="left:72px;top:4px"><circle cx="6" cy="6" r="5" fill="none" stroke="#e0e0e0" stroke-width="1.100"/><circle cx="6" cy="6" r="2.500" fill="none" stroke="#e0e0e0" stroke-width="1.100"/></svg><div class="nm" style="left:94px">内部约束 3</div></div><div class="row" style="top:305px;background:#535353"><div class="eyec"></div><svg width="14" height="9" viewBox="0 0 14 9" style="left:4px;top:5px"><path d="M0.300 4.500 q6.700 -8 13.400 0 q-6.700 7 -13.400 0z" fill="#e4e4e4"/><circle cx="7" cy="4.300" r="2.700" fill="#535353"/><circle cx="7" cy="4.300" r="1.500" fill="#f0f0f0"/></svg><svg width="14" height="14" viewBox="0 0 14 14" style="left:40px;top:4px"><circle cx="6" cy="6" r="2.400" fill="#d4d4d4"/><line x1="9.60" y1="6.00" x2="11.60" y2="6.00" stroke="#d4d4d4" stroke-width="1"/><line x1="8.55" y1="8.55" x2="9.96" y2="9.96" stroke="#d4d4d4" stroke-width="1"/><line x1="6.00" y1="9.60" x2="6.00" y2="11.60" stroke="#d4d4d4" stroke-width="1"/><line x1="3.45" y1="8.55" x2="2.04" y2="9.96" stroke="#d4d4d4" stroke-width="1"/><line x1="2.40" y1="6.00" x2="0.40" y2="6.00" stroke="#d4d4d4" stroke-width="1"/><line x1="3.45" y1="3.45" x2="2.04" y2="2.04" stroke="#d4d4d4" stroke-width="1"/><line x1="6.00" y1="2.40" x2="6.00" y2="0.40" stroke="#d4d4d4" stroke-width="1"/><line x1="8.55" y1="3.45" x2="9.96" y2="2.04" stroke="#d4d4d4" stroke-width="1"/><path d="M10 10 l3 3 M13 10.500 v2.500 h-2.500" stroke="#d4d4d4" stroke-width="1" fill="none"/></svg><div class="nm" style="left:62px">无限光 1</div></div><div class="row" style="top:325px;background:#535353"><div class="eyec"></div><svg width="14" height="9" viewBox="0 0 14 9" style="left:4px;top:5px"><path d="M0.300 4.500 q6.700 -8 13.400 0 q-6.700 7 -13.400 0z" fill="#7d7d7d"/><circle cx="7" cy="4.300" r="2.700" fill="#535353"/><circle cx="7" cy="4.300" r="1.500" fill="#8c8c8c"/></svg><svg width="16" height="11" viewBox="0 0 16 11" style="left:40px;top:5px"><rect x="0" y="1" width="10.500" height="9" rx="2" fill="#c9c9c9"/><path d="M10 5.500 l4.500 -3.500 v7z" fill="#c9c9c9"/></svg><div class="nm" style="left:62px">默认相机</div></div><div class="pfoot" style="top:421px"></div><svg width="16" height="14" viewBox="0 0 16 14" style="left:145px;top:427px"><path d="M0.500 0.500 h10 v10 h-5 l-5 -5z" fill="#cfcfcf"/><path d="M0.500 5.500 h5 v5z" fill="#555" stroke="#cfcfcf" stroke-width="0.800"/><path d="M12 10 h4 l-2 2.500z" fill="#e8e8e8"/></svg><svg width="12" height="14" viewBox="0 0 12 14" style="left:173px;top:426px"><path d="M0.500 3.500 h11 M4 3 v-1.500 h4 v1.500 M1.500 4.500 l0.700 8.500 h7.600 l0.700 -8.500" fill="none" stroke="#8a8a8a" stroke-width="1.200"/><path d="M4 5.500 v6 M6 5.500 v6 M8 5.500 v6" stroke="#8a8a8a" stroke-width="1"/></svg><svg width="10" height="10" viewBox="0 0 10 10" style="left:198px;top:430px" shape-rendering="crispEdges"><rect x="8" y="0" width="1" height="1" fill="#8a8a8a"/><rect x="6" y="2" width="1" height="1" fill="#8a8a8a"/><rect x="8" y="2" width="1" height="1" fill="#8a8a8a"/><rect x="4" y="4" width="1" height="1" fill="#8a8a8a"/><rect x="6" y="4" width="1" height="1" fill="#8a8a8a"/><rect x="8" y="4" width="1" height="1" fill="#8a8a8a"/><rect x="2" y="6" width="1" height="1" fill="#8a8a8a"/><rect x="4" y="6" width="1" height="1" fill="#8a8a8a"/><rect x="6" y="6" width="1" height="1" fill="#8a8a8a"/><rect x="8" y="6" width="1" height="1" fill="#8a8a8a"/><rect x="0" y="8" width="1" height="1" fill="#8a8a8a"/><rect x="2" y="8" width="1" height="1" fill="#8a8a8a"/><rect x="4" y="8" width="1" height="1" fill="#8a8a8a"/><rect x="6" y="8" width="1" height="1" fill="#8a8a8a"/><rect x="8" y="8" width="1" height="1" fill="#8a8a8a"/></svg><div class="pgrip" style="top:441px"></div><div class="grip" style="left:95px;top:444px;width:20px"></div></div>
</div>
</body>
</html>
